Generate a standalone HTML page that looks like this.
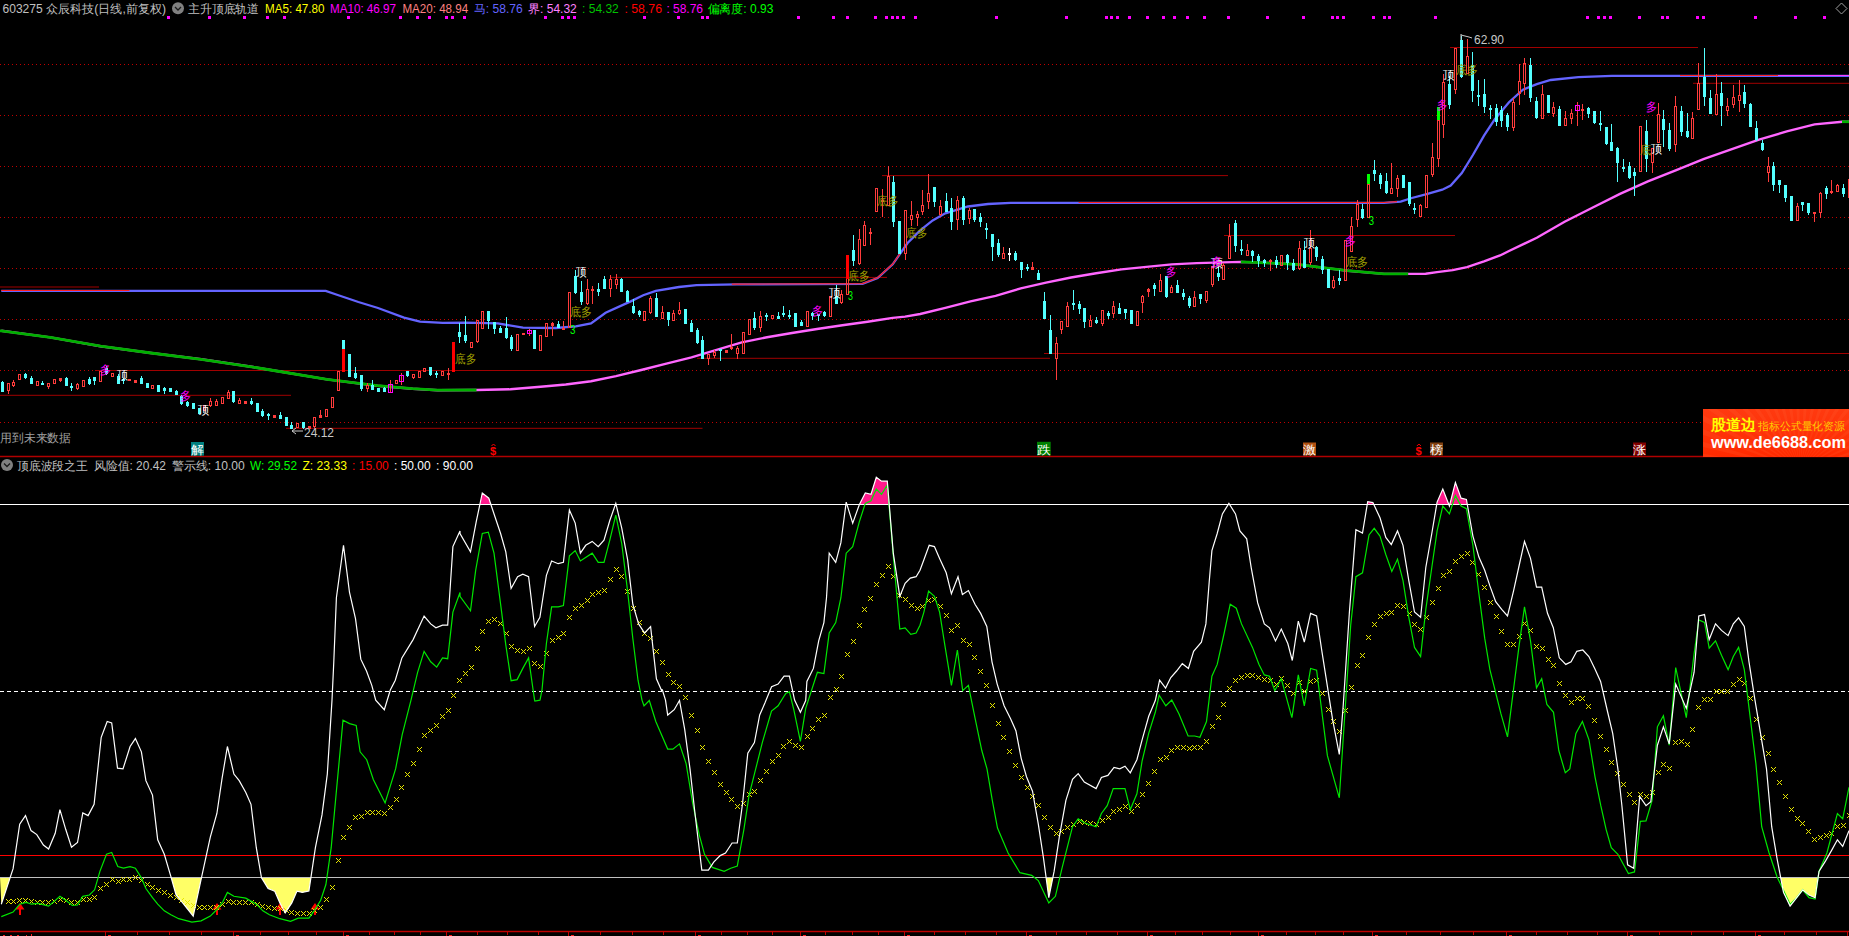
<!DOCTYPE html>
<html><head><meta charset="utf-8">
<style>
html,body{margin:0;padding:0;background:#000;}
body{width:1849px;height:936px;overflow:hidden;position:relative;font-family:"Liberation Sans",sans-serif;}
svg{position:absolute;left:0;top:0;font-family:"Liberation Sans",sans-serif;}
.t{position:absolute;font-size:12px;line-height:14px;white-space:nowrap;}
</style></head><body>
<svg width="1849" height="936" viewBox="0 0 1849 936">
<line x1="0" y1="456.5" x2="1849" y2="456.5" stroke="#b00000" stroke-width="1.5"/>
<line x1="0" y1="64.5" x2="1849" y2="64.5" stroke="#c00000" stroke-width="1" stroke-dasharray="1,3"/>
<line x1="0" y1="115.5" x2="1849" y2="115.5" stroke="#c00000" stroke-width="1" stroke-dasharray="1,3"/>
<line x1="0" y1="166.5" x2="1849" y2="166.5" stroke="#c00000" stroke-width="1" stroke-dasharray="1,3"/>
<line x1="0" y1="217.5" x2="1849" y2="217.5" stroke="#c00000" stroke-width="1" stroke-dasharray="1,3"/>
<line x1="0" y1="268.5" x2="1849" y2="268.5" stroke="#c00000" stroke-width="1" stroke-dasharray="1,3"/>
<line x1="0" y1="319.5" x2="1849" y2="319.5" stroke="#c00000" stroke-width="1" stroke-dasharray="1,3"/>
<line x1="0" y1="370.5" x2="1849" y2="370.5" stroke="#c00000" stroke-width="1" stroke-dasharray="1,3"/>
<line x1="0" y1="422.5" x2="1849" y2="422.5" stroke="#c00000" stroke-width="1" stroke-dasharray="1,3"/>
<line x1="0" y1="287" x2="99" y2="287" stroke="#a00000" stroke-width="1"/>
<line x1="95" y1="370.5" x2="615" y2="370.5" stroke="#a00000" stroke-width="1"/>
<line x1="0" y1="395.3" x2="291" y2="395.3" stroke="#a00000" stroke-width="1"/>
<line x1="286" y1="428.3" x2="702.5" y2="428.3" stroke="#a00000" stroke-width="1"/>
<line x1="610" y1="277.4" x2="887" y2="277.4" stroke="#a00000" stroke-width="1"/>
<line x1="697" y1="358.3" x2="1050" y2="358.3" stroke="#a00000" stroke-width="1"/>
<line x1="882" y1="175.6" x2="1228" y2="175.6" stroke="#a00000" stroke-width="1"/>
<line x1="1044" y1="353.5" x2="1849" y2="353.5" stroke="#a00000" stroke-width="1"/>
<line x1="1224" y1="235.5" x2="1455" y2="235.5" stroke="#a00000" stroke-width="1"/>
<line x1="1450" y1="47.5" x2="1698" y2="47.5" stroke="#a00000" stroke-width="1"/>
<line x1="1693" y1="83.3" x2="1849" y2="83.3" stroke="#a00000" stroke-width="1"/>
<polyline points="1.3,290.8 325.7,290.8 337.7,295.0 358.4,302.0 378.0,308.0 404.0,317.7 420.0,321.6 442.7,322.8 465.2,322.7 497.8,323.4 523.0,327.7 555.7,328.0 575.8,326.4 591.0,323.4 605.6,312.7 630.7,301.4 643.2,295.2 655.8,290.8 679.0,287.0 696.5,285.2 736.8,284.4 862.5,283.9 877.6,278.1 892.7,264.3 907.6,243.0 920.2,230.4 932.7,220.4 945.3,213.3 968.0,206.5 988.0,204.0 1010.7,202.8 1384.0,202.8 1400.7,201.7 1411.8,198.0 1425.7,194.4 1442.3,189.7 1450.7,185.6 1461.8,173.0 1472.9,155.0 1484.0,135.6 1495.0,118.9 1509.0,102.2 1522.9,89.7 1536.8,84.2 1550.7,80.0 1578.4,77.2 1611.8,75.8 1849.0,75.8" fill="none" stroke="#6464ff" stroke-width="2.3"/>
<polyline points="1.3,290.5 129.5,290.5" fill="none" stroke="#ff2020" stroke-width="1.2"/>
<polyline points="731.8,284.2 736.8,284.1 862.5,283.6 877.6,277.8 892.7,264.0 900.0,253.6" fill="none" stroke="#ff2020" stroke-width="1.2"/>
<polyline points="1078.6,202.5 1384.0,202.5 1397.0,201.6" fill="none" stroke="#ff2020" stroke-width="1.2"/>
<polyline points="1680.0,75.5 1778.0,75.5" fill="none" stroke="#ff2020" stroke-width="1.2"/>
<polyline points="1778.0,75.5 1849.0,75.5" fill="none" stroke="#ff40ff" stroke-width="1.2"/>
<polyline points="1.3,330.8 50.3,337.4 100.6,346.2 150.9,353.0 201.2,359.3 251.5,366.8 276.7,371.0 327.0,379.4 377.3,385.7 412.5,388.7 437.6,390.2 476.5,390.0 510.4,389.3 540.6,386.8 565.8,384.5 591.0,381.3 616.0,376.2 641.2,370.0 666.4,363.7 691.5,357.4 704.0,353.6 741.8,342.3 767.0,337.3 792.0,333.0 817.0,329.0 842.4,325.2 867.6,321.7 892.7,317.9 905.0,316.6 920.2,314.0 945.3,307.9 970.5,301.3 995.6,295.8 1020.8,288.3 1046.0,282.7 1071.0,277.5 1096.2,273.2 1121.4,269.4 1146.5,266.9 1171.7,264.4 1196.8,263.1 1240.8,261.9 1272.2,263.1 1297.4,264.4 1322.5,267.6 1347.7,270.7 1384.0,273.9 1409.0,273.9 1425.7,273.8 1437.0,272.1 1452.7,270.1 1467.0,267.2 1484.0,261.4 1500.0,255.5 1509.0,251.0 1536.8,237.8 1564.6,221.7 1592.3,207.8 1620.0,193.9 1647.9,181.4 1675.7,170.3 1703.4,159.2 1731.2,149.4 1759.0,139.7 1786.8,131.4 1814.6,124.4 1842.3,121.7 1849.0,121.7" fill="none" stroke="#ff66ff" stroke-width="2.4"/>
<polyline points="0.0,330.8 1.3,330.8 50.3,337.4 100.6,346.2 150.9,353.0 201.2,359.3 251.5,366.8 276.7,371.0 327.0,379.4 377.3,385.7 412.5,388.7 437.6,390.2 476.5,390.0" fill="none" stroke="#00b000" stroke-width="2.8"/>
<polyline points="1240.8,261.9 1272.2,263.1 1297.4,264.4 1322.5,267.6 1347.7,270.7 1384.0,273.9 1408.2,273.9" fill="none" stroke="#00b000" stroke-width="2.8"/>
<polyline points="1842.0,121.7 1842.3,121.7 1849.0,121.7" fill="none" stroke="#00b000" stroke-width="2.8"/>
<path d="M2,381h1v11h-1zM1,382h3v10h-3zM25,373h1v6h-1zM24,374h3v4h-3zM31,376h1v8h-1zM30,378h3v6h-3zM42,381h1v4h-1zM41,383h3v2h-3zM66,377h1v9h-1zM65,378h3v8h-3zM71,383h1v8h-1zM70,386h3v2h-3zM89,377h1v8h-1zM88,379h3v5h-3zM94,377h1v8h-1zM93,377h3v4h-3zM106,366h1v9h-1zM105,368h3v6h-3zM118,374h1v10h-1zM117,376h3v8h-3zM123,378h1v6h-1zM122,379h3v2h-3zM141,376h1v8h-1zM140,378h3v6h-3zM147,383h1v5h-1zM146,383h3v5h-3zM158,385h1v7h-1zM157,385h3v7h-3zM164,387h1v7h-1zM163,388h3v3h-3zM170,388h1v4h-1zM169,388h3v4h-3zM176,390h1v5h-1zM175,391h3v4h-3zM181,395h1v10h-1zM180,396h3v8h-3zM187,401h1v6h-1zM186,402h3v4h-3zM193,403h1v6h-1zM192,403h3v6h-3zM199,408h1v6h-1zM198,408h3v6h-3zM233,391h1v12h-1zM232,391h3v11h-3zM251,398h1v7h-1zM250,401h3v3h-3zM257,403h1v9h-1zM256,403h3v9h-3zM262,409h1v8h-1zM261,411h3v5h-3zM268,413h1v7h-1zM267,414h3v2h-3zM280,412h1v7h-1zM279,415h3v4h-3zM286,417h1v9h-1zM285,417h3v9h-3zM291,422h1v7h-1zM290,425h3v4h-3zM303,422h1v7h-1zM302,422h3v6h-3zM342,340h3v9h-3zM349,354h1v23h-1zM348,354h3v23h-3zM355,367h1v12h-1zM354,373h3v5h-3zM361,375h1v16h-1zM360,375h3v14h-3zM372,380h1v10h-1zM371,385h3v5h-3zM378,388h1v4h-1zM377,388h3v4h-3zM384,387h1v5h-1zM383,388h3v4h-3zM407,371h1v6h-1zM406,371h3v5h-3zM430,367h1v9h-1zM429,367h3v8h-3zM436,371h1v7h-1zM435,373h3v2h-3zM459,323h1v20h-1zM458,332h3v5h-3zM465,316h1v27h-1zM464,335h3v6h-3zM488,311h1v18h-1zM487,311h3v10h-3zM494,322h1v12h-1zM493,322h3v7h-3zM500,326h1v7h-1zM499,328h3v5h-3zM506,317h1v22h-1zM505,328h3v10h-3zM511,335h1v16h-1zM510,337h3v12h-3zM534,330h1v19h-1zM533,330h3v19h-3zM558,321h1v7h-1zM557,324h3v4h-3zM575,270h1v24h-1zM574,276h3v17h-3zM581,281h1v24h-1zM580,292h3v10h-3zM598,283h1v13h-1zM597,289h3v3h-3zM604,276h1v13h-1zM603,279h3v10h-3zM621,278h1v14h-1zM620,279h3v13h-3zM627,290h1v12h-1zM626,291h3v11h-3zM633,299h1v15h-1zM632,306h3v7h-3zM639,310h1v7h-1zM638,311h3v4h-3zM656,293h1v24h-1zM655,298h3v19h-3zM668,312h1v14h-1zM667,312h3v8h-3zM685,309h1v15h-1zM684,309h3v15h-3zM691,320h1v12h-1zM690,323h3v9h-3zM697,328h1v16h-1zM696,330h3v13h-3zM702,336h1v23h-1zM701,340h3v19h-3zM720,349h1v12h-1zM719,349h3v2h-3zM754,312h1v18h-1zM753,318h3v10h-3zM766,313h1v8h-1zM765,315h3v2h-3zM778,312h1v7h-1zM777,316h3v3h-3zM783,306h1v11h-1zM782,313h3v2h-3zM789,310h1v9h-1zM788,315h3v2h-3zM795,313h1v14h-1zM794,313h3v14h-3zM801,320h1v6h-1zM800,322h3v4h-3zM812,312h1v8h-1zM811,313h3v3h-3zM818,314h1v7h-1zM817,314h3v2h-3zM824,311h1v6h-1zM823,312h3v4h-3zM836,285h1v19h-1zM835,296h3v8h-3zM853,235h1v31h-1zM852,250h3v11h-3zM893,176h1v51h-1zM892,182h3v40h-3zM899,221h1v33h-1zM898,221h3v33h-3zM934,187h1v20h-1zM933,187h3v15h-3zM946,193h1v19h-1zM945,201h3v11h-3zM951,198h1v32h-1zM950,208h3v14h-3zM963,196h1v29h-1zM962,198h3v22h-3zM974,209h1v13h-1zM973,209h3v11h-3zM980,213h1v14h-1zM979,217h3v5h-3zM986,223h1v16h-1zM985,228h3v2h-3zM992,234h1v27h-1zM991,234h3v13h-3zM998,239h1v18h-1zM997,243h3v12h-3zM1015,251h1v10h-1zM1014,253h3v7h-3zM1021,262h1v16h-1zM1020,262h3v8h-3zM1027,264h1v7h-1zM1026,267h3v2h-3zM1038,270h1v10h-1zM1037,273h3v7h-3zM1044,292h1v27h-1zM1043,301h3v18h-3zM1050,315h1v39h-1zM1049,330h3v24h-3zM1073,290h1v20h-1zM1072,303h3v2h-3zM1079,301h1v13h-1zM1078,304h3v5h-3zM1084,308h1v20h-1zM1083,308h3v14h-3zM1096,317h1v7h-1zM1095,320h3v3h-3zM1108,311h1v8h-1zM1107,313h3v3h-3zM1119,303h1v11h-1zM1118,308h3v6h-3zM1125,309h1v10h-1zM1124,309h3v4h-3zM1131,310h1v14h-1zM1130,310h3v14h-3zM1154,283h1v13h-1zM1153,285h3v4h-3zM1166,276h1v22h-1zM1165,276h3v21h-3zM1177,280h1v13h-1zM1176,285h3v8h-3zM1183,289h1v11h-1zM1182,293h3v4h-3zM1189,296h1v12h-1zM1188,298h3v8h-3zM1200,294h1v10h-1zM1199,294h3v5h-3zM1218,267h1v14h-1zM1217,273h3v4h-3zM1235,220h1v32h-1zM1234,223h3v23h-3zM1241,240h1v15h-1zM1240,249h3v2h-3zM1252,250h1v12h-1zM1251,251h3v5h-3zM1258,254h1v13h-1zM1257,256h3v5h-3zM1264,259h1v8h-1zM1263,260h3v3h-3zM1276,256h1v12h-1zM1275,260h3v5h-3zM1287,254h1v16h-1zM1286,255h3v8h-3zM1293,259h1v12h-1zM1292,263h3v7h-3zM1304,241h1v27h-1zM1303,250h3v18h-3zM1316,246h1v15h-1zM1315,247h3v10h-3zM1322,256h1v18h-1zM1321,259h3v11h-3zM1328,269h1v19h-1zM1327,269h3v19h-3zM1339,270h1v15h-1zM1338,278h3v3h-3zM1362,204h1v15h-1zM1361,209h3v9h-3zM1374,160h1v21h-1zM1373,170h3v4h-3zM1380,173h1v16h-1zM1379,175h3v9h-3zM1386,173h1v21h-1zM1385,181h3v12h-3zM1403,175h1v13h-1zM1402,175h3v13h-3zM1409,182h1v24h-1zM1408,182h3v22h-3zM1414,203h1v11h-1zM1413,208h3v2h-3zM1449,76h1v33h-1zM1448,84h3v21h-3zM1461,36h1v42h-1zM1460,40h3v37h-3zM1472,52h1v50h-1zM1471,65h3v26h-3zM1478,80h1v26h-1zM1477,95h3v2h-3zM1484,79h1v34h-1zM1483,94h3v13h-3zM1490,105h1v14h-1zM1489,108h3v2h-3zM1496,104h1v22h-1zM1495,108h3v14h-3zM1501,106h1v21h-1zM1500,110h3v11h-3zM1507,113h1v18h-1zM1506,115h3v12h-3zM1530,58h1v44h-1zM1529,65h3v33h-3zM1536,97h1v22h-1zM1535,101h3v17h-3zM1548,95h1v18h-1zM1547,95h3v18h-3zM1559,106h1v20h-1zM1558,109h3v17h-3zM1588,107h1v11h-1zM1587,108h3v6h-3zM1594,111h1v13h-1zM1593,111h3v12h-3zM1600,111h1v20h-1zM1599,123h3v2h-3zM1606,127h1v18h-1zM1605,127h3v17h-3zM1611,124h1v27h-1zM1610,142h3v9h-3zM1617,147h1v35h-1zM1616,148h3v15h-3zM1623,159h1v13h-1zM1622,167h3v2h-3zM1629,162h1v17h-1zM1628,166h3v12h-3zM1634,168h1v28h-1zM1633,172h3v4h-3zM1646,120h1v52h-1zM1645,131h3v28h-3zM1663,110h1v37h-1zM1662,119h3v11h-3zM1669,123h1v28h-1zM1668,130h3v19h-3zM1681,106h1v30h-1zM1680,111h3v21h-3zM1687,113h1v25h-1zM1686,131h3v6h-3zM1704,48h1v58h-1zM1703,77h3v20h-3zM1710,90h1v24h-1zM1709,98h3v16h-3zM1721,82h1v44h-1zM1720,93h3v13h-3zM1744,85h1v23h-1zM1743,92h3v12h-3zM1750,103h1v24h-1zM1749,104h3v23h-3zM1756,121h1v20h-1zM1755,128h3v12h-3zM1762,140h1v11h-1zM1761,143h3v7h-3zM1773,162h1v29h-1zM1772,166h3v19h-3zM1779,180h1v13h-1zM1778,180h3v5h-3zM1785,185h1v17h-1zM1784,185h3v13h-3zM1791,196h1v25h-1zM1790,196h3v25h-3zM1802,202h1v9h-1zM1801,202h3v3h-3zM1808,203h1v12h-1zM1807,203h3v10h-3zM1826,186h1v13h-1zM1825,188h3v6h-3zM1843,184h1v13h-1zM1842,188h3v6h-3z" fill="#54ffff" shape-rendering="crispEdges"/>
<path d="M8,391h1v3h-1zM7,383h1v8h-1zM9,383h1v8h-1zM8,383h1v1h-1zM8,390h1v1h-1zM13,380h1v2h-1zM13,386h1v1h-1zM12,382h1v4h-1zM14,382h1v4h-1zM13,382h1v1h-1zM13,385h1v1h-1zM18,374h1v6h-1zM20,374h1v6h-1zM19,374h1v1h-1zM19,379h1v1h-1zM36,381h1v5h-1zM38,381h1v5h-1zM37,381h1v1h-1zM37,385h1v1h-1zM48,387h1v2h-1zM47,383h1v4h-1zM49,383h1v4h-1zM48,383h1v1h-1zM48,386h1v1h-1zM53,379h1v5h-1zM55,379h1v5h-1zM54,379h1v1h-1zM54,383h1v1h-1zM60,381h1v1h-1zM59,378h3v3h-3zM77,383h1v1h-1zM77,389h1v1h-1zM76,384h1v5h-1zM78,384h1v5h-1zM77,384h1v1h-1zM77,388h1v1h-1zM82,380h1v7h-1zM84,380h1v7h-1zM83,380h1v1h-1zM83,386h1v1h-1zM99,371h1v11h-1zM101,371h1v11h-1zM100,371h1v1h-1zM100,381h1v1h-1zM111,373h1v4h-1zM113,373h1v4h-1zM112,373h1v1h-1zM112,376h1v1h-1zM128,379h3v2h-3zM134,380h3v3h-3zM151,385h1v4h-1zM153,385h1v4h-1zM152,385h1v1h-1zM152,388h1v1h-1zM203,405h1v6h-1zM205,405h1v6h-1zM204,405h1v1h-1zM204,410h1v1h-1zM210,398h1v3h-1zM210,406h1v1h-1zM209,401h1v5h-1zM211,401h1v5h-1zM210,401h1v1h-1zM210,405h1v1h-1zM216,399h1v2h-1zM215,401h1v5h-1zM217,401h1v5h-1zM216,401h1v1h-1zM216,405h1v1h-1zM221,397h1v7h-1zM223,397h1v7h-1zM222,397h1v1h-1zM222,403h1v1h-1zM228,390h1v2h-1zM227,392h1v7h-1zM229,392h1v7h-1zM228,392h1v1h-1zM228,398h1v1h-1zM239,398h1v2h-1zM238,400h1v4h-1zM240,400h1v4h-1zM239,400h1v1h-1zM239,403h1v1h-1zM244,401h3v3h-3zM273,415h3v3h-3zM296,423h1v5h-1zM298,423h1v5h-1zM297,423h1v1h-1zM297,427h1v1h-1zM308,426h3v3h-3zM314,427h1v1h-1zM313,417h1v10h-1zM315,417h1v10h-1zM314,417h1v1h-1zM314,426h1v1h-1zM320,410h1v5h-1zM319,415h3v3h-3zM325,409h1v8h-1zM327,409h1v8h-1zM326,409h1v1h-1zM326,416h1v1h-1zM331,397h1v11h-1zM333,397h1v11h-1zM332,397h1v1h-1zM332,407h1v1h-1zM337,371h1v20h-1zM339,371h1v20h-1zM338,371h1v1h-1zM338,390h1v1h-1zM367,383h1v2h-1zM367,389h1v3h-1zM366,385h1v4h-1zM368,385h1v4h-1zM367,385h1v1h-1zM367,388h1v1h-1zM390,380h1v13h-1zM395,380h1v4h-1zM397,380h1v4h-1zM396,380h1v1h-1zM396,383h1v1h-1zM401,373h1v12h-1zM413,378h1v1h-1zM412,374h1v4h-1zM414,374h1v4h-1zM413,374h1v1h-1zM413,377h1v1h-1zM418,371h1v7h-1zM420,371h1v7h-1zM419,371h1v1h-1zM419,377h1v1h-1zM423,368h1v4h-1zM425,368h1v4h-1zM424,368h1v1h-1zM424,371h1v1h-1zM441,371h1v5h-1zM443,371h1v5h-1zM442,371h1v1h-1zM442,375h1v1h-1zM448,368h1v5h-1zM448,375h1v5h-1zM447,373h3v2h-3zM470,342h1v6h-1zM472,342h1v6h-1zM471,342h1v1h-1zM471,347h1v1h-1zM477,342h1v1h-1zM476,320h1v22h-1zM478,320h1v22h-1zM477,320h1v1h-1zM477,341h1v1h-1zM481,311h1v18h-1zM483,311h1v18h-1zM482,311h1v1h-1zM482,328h1v1h-1zM516,334h1v17h-1zM518,334h1v17h-1zM517,334h1v1h-1zM517,350h1v1h-1zM522,333h3v2h-3zM529,329h1v7h-1zM539,335h1v16h-1zM541,335h1v16h-1zM540,335h1v1h-1zM540,350h1v1h-1zM545,323h1v14h-1zM547,323h1v14h-1zM546,323h1v1h-1zM546,336h1v1h-1zM552,322h1v1h-1zM552,326h1v10h-1zM551,323h3v3h-3zM563,321h1v7h-1zM562,328h3v2h-3zM568,292h1v36h-1zM570,292h1v36h-1zM569,292h1v1h-1zM569,327h1v1h-1zM587,279h1v10h-1zM587,304h1v1h-1zM586,289h1v15h-1zM588,289h1v15h-1zM587,289h1v1h-1zM587,303h1v1h-1zM592,286h1v3h-1zM592,291h1v13h-1zM591,289h3v2h-3zM610,275h1v4h-1zM610,289h1v8h-1zM609,279h1v10h-1zM611,279h1v10h-1zM610,279h1v1h-1zM610,288h1v1h-1zM616,274h1v5h-1zM616,285h1v4h-1zM615,279h1v6h-1zM617,279h1v6h-1zM616,279h1v1h-1zM616,284h1v1h-1zM643,311h1v10h-1zM645,311h1v10h-1zM644,311h1v1h-1zM644,320h1v1h-1zM650,296h1v2h-1zM650,313h1v1h-1zM649,298h1v15h-1zM651,298h1v15h-1zM650,298h1v1h-1zM650,312h1v1h-1zM662,306h1v6h-1zM661,312h1v7h-1zM663,312h1v7h-1zM662,312h1v1h-1zM662,318h1v1h-1zM673,310h1v3h-1zM672,313h1v8h-1zM674,313h1v8h-1zM673,313h1v1h-1zM673,320h1v1h-1zM679,302h1v8h-1zM679,314h1v1h-1zM678,310h1v4h-1zM680,310h1v4h-1zM679,310h1v1h-1zM679,313h1v1h-1zM708,359h1v6h-1zM707,354h1v5h-1zM709,354h1v5h-1zM708,354h1v1h-1zM708,358h1v1h-1zM714,350h1v2h-1zM714,356h1v2h-1zM713,352h1v4h-1zM715,352h1v4h-1zM714,352h1v1h-1zM714,355h1v1h-1zM725,350h3v3h-3zM731,334h1v13h-1zM731,349h1v1h-1zM730,347h3v2h-3zM737,346h1v2h-1zM737,354h1v5h-1zM736,348h1v6h-1zM738,348h1v6h-1zM737,348h1v1h-1zM737,353h1v1h-1zM742,332h1v22h-1zM744,332h1v22h-1zM743,332h1v1h-1zM743,353h1v1h-1zM748,319h1v16h-1zM750,319h1v16h-1zM749,319h1v1h-1zM749,334h1v1h-1zM760,311h1v5h-1zM760,328h1v4h-1zM759,316h1v12h-1zM761,316h1v12h-1zM760,316h1v1h-1zM760,327h1v1h-1zM771,315h1v4h-1zM773,315h1v4h-1zM772,315h1v1h-1zM772,318h1v1h-1zM806,311h1v16h-1zM808,311h1v16h-1zM807,311h1v1h-1zM807,326h1v1h-1zM829,296h1v21h-1zM831,296h1v21h-1zM830,296h1v1h-1zM830,316h1v1h-1zM841,290h1v4h-1zM841,303h1v1h-1zM840,294h1v9h-1zM842,294h1v9h-1zM841,294h1v1h-1zM841,302h1v1h-1zM846,279h1v16h-1zM848,279h1v16h-1zM847,294h1v1h-1zM859,229h1v10h-1zM859,264h1v1h-1zM858,239h1v25h-1zM860,239h1v25h-1zM859,239h1v1h-1zM859,263h1v1h-1zM864,221h1v4h-1zM863,225h1v21h-1zM865,225h1v21h-1zM864,225h1v1h-1zM864,245h1v1h-1zM870,228h1v4h-1zM870,234h1v11h-1zM869,232h3v2h-3zM875,188h1v24h-1zM877,188h1v24h-1zM876,188h1v1h-1zM876,211h1v1h-1zM882,189h1v11h-1zM882,202h1v15h-1zM881,200h3v2h-3zM888,166h1v10h-1zM887,176h1v30h-1zM889,176h1v30h-1zM888,176h1v1h-1zM888,205h1v1h-1zM905,254h1v6h-1zM904,210h1v44h-1zM906,210h1v44h-1zM905,210h1v1h-1zM905,253h1v1h-1zM911,201h1v14h-1zM911,220h1v6h-1zM910,215h1v5h-1zM912,215h1v5h-1zM911,215h1v1h-1zM911,219h1v1h-1zM917,211h1v3h-1zM917,218h1v8h-1zM916,214h1v4h-1zM918,214h1v4h-1zM917,214h1v1h-1zM917,217h1v1h-1zM922,190h1v15h-1zM922,212h1v3h-1zM921,205h1v7h-1zM923,205h1v7h-1zM922,205h1v1h-1zM922,211h1v1h-1zM928,174h1v19h-1zM928,202h1v7h-1zM927,193h1v9h-1zM929,193h1v9h-1zM928,193h1v1h-1zM928,201h1v1h-1zM940,200h1v6h-1zM940,215h1v1h-1zM939,206h1v9h-1zM941,206h1v9h-1zM940,206h1v1h-1zM940,214h1v1h-1zM957,196h1v4h-1zM957,220h1v10h-1zM956,200h1v20h-1zM958,200h1v20h-1zM957,200h1v1h-1zM957,219h1v1h-1zM969,208h1v2h-1zM969,219h1v5h-1zM968,210h1v9h-1zM970,210h1v9h-1zM969,210h1v1h-1zM969,218h1v1h-1zM1003,247h1v6h-1zM1002,253h1v6h-1zM1004,253h1v6h-1zM1003,253h1v1h-1zM1003,258h1v1h-1zM1032,262h1v5h-1zM1031,267h3v3h-3zM1056,337h1v6h-1zM1056,359h1v21h-1zM1055,343h1v16h-1zM1057,343h1v16h-1zM1056,343h1v1h-1zM1056,358h1v1h-1zM1061,330h1v4h-1zM1060,321h1v9h-1zM1062,321h1v9h-1zM1061,321h1v1h-1zM1061,329h1v1h-1zM1067,302h1v4h-1zM1066,306h1v21h-1zM1068,306h1v21h-1zM1067,306h1v1h-1zM1067,326h1v1h-1zM1090,315h1v5h-1zM1089,320h1v7h-1zM1091,320h1v7h-1zM1090,320h1v1h-1zM1090,326h1v1h-1zM1102,324h1v2h-1zM1101,310h1v14h-1zM1103,310h1v14h-1zM1102,310h1v1h-1zM1102,323h1v1h-1zM1113,301h1v5h-1zM1113,314h1v4h-1zM1112,306h1v8h-1zM1114,306h1v8h-1zM1113,306h1v1h-1zM1113,313h1v1h-1zM1136,311h1v15h-1zM1138,311h1v15h-1zM1137,311h1v1h-1zM1137,325h1v1h-1zM1142,295h1v1h-1zM1142,303h1v10h-1zM1141,296h1v7h-1zM1143,296h1v7h-1zM1142,296h1v1h-1zM1142,302h1v1h-1zM1148,288h1v1h-1zM1148,292h1v5h-1zM1147,289h3v3h-3zM1160,274h1v6h-1zM1159,280h1v12h-1zM1161,280h1v12h-1zM1160,280h1v1h-1zM1160,291h1v1h-1zM1171,285h1v2h-1zM1170,287h1v6h-1zM1172,287h1v6h-1zM1171,287h1v1h-1zM1171,292h1v1h-1zM1194,291h1v6h-1zM1193,297h1v10h-1zM1195,297h1v10h-1zM1194,297h1v1h-1zM1194,306h1v1h-1zM1206,301h1v2h-1zM1205,291h1v10h-1zM1207,291h1v10h-1zM1206,291h1v1h-1zM1206,300h1v1h-1zM1212,285h1v2h-1zM1211,266h1v19h-1zM1213,266h1v19h-1zM1212,266h1v1h-1zM1212,284h1v1h-1zM1223,263h1v2h-1zM1222,265h1v15h-1zM1224,265h1v15h-1zM1223,265h1v1h-1zM1223,279h1v1h-1zM1229,224h1v12h-1zM1228,236h1v23h-1zM1230,236h1v23h-1zM1229,236h1v1h-1zM1229,258h1v1h-1zM1247,244h1v6h-1zM1246,250h1v6h-1zM1248,250h1v6h-1zM1247,250h1v1h-1zM1247,255h1v1h-1zM1270,259h1v1h-1zM1270,262h1v9h-1zM1269,260h3v2h-3zM1280,255h1v11h-1zM1282,255h1v11h-1zM1281,255h1v1h-1zM1281,265h1v1h-1zM1299,241h1v7h-1zM1299,269h1v1h-1zM1298,248h1v21h-1zM1300,248h1v21h-1zM1299,248h1v1h-1zM1299,268h1v1h-1zM1310,230h1v18h-1zM1310,263h1v2h-1zM1309,248h1v15h-1zM1311,248h1v15h-1zM1310,248h1v1h-1zM1310,262h1v1h-1zM1333,276h1v4h-1zM1333,288h1v1h-1zM1332,280h1v8h-1zM1334,280h1v8h-1zM1333,280h1v1h-1zM1333,287h1v1h-1zM1344,240h1v41h-1zM1346,240h1v41h-1zM1345,240h1v1h-1zM1345,280h1v1h-1zM1351,217h1v9h-1zM1350,226h1v26h-1zM1352,226h1v26h-1zM1351,226h1v1h-1zM1351,251h1v1h-1zM1357,200h1v4h-1zM1357,220h1v7h-1zM1356,204h1v16h-1zM1358,204h1v16h-1zM1357,204h1v1h-1zM1357,219h1v1h-1zM1368,174h1v10h-1zM1367,184h1v34h-1zM1369,184h1v34h-1zM1368,184h1v1h-1zM1368,217h1v1h-1zM1391,163h1v25h-1zM1390,188h1v6h-1zM1392,188h1v6h-1zM1391,188h1v1h-1zM1391,193h1v1h-1zM1397,175h1v3h-1zM1397,189h1v8h-1zM1396,178h1v11h-1zM1398,178h1v11h-1zM1397,178h1v1h-1zM1397,188h1v1h-1zM1420,204h1v1h-1zM1419,205h1v12h-1zM1421,205h1v12h-1zM1420,205h1v1h-1zM1420,216h1v1h-1zM1425,175h1v33h-1zM1427,175h1v33h-1zM1426,175h1v1h-1zM1426,207h1v1h-1zM1432,143h1v14h-1zM1432,175h1v2h-1zM1431,157h1v18h-1zM1433,157h1v18h-1zM1432,157h1v1h-1zM1432,174h1v1h-1zM1438,107h1v13h-1zM1438,159h1v8h-1zM1437,120h1v39h-1zM1439,120h1v39h-1zM1438,120h1v1h-1zM1438,158h1v1h-1zM1443,74h1v8h-1zM1443,125h1v13h-1zM1442,82h1v43h-1zM1444,82h1v43h-1zM1443,82h1v1h-1zM1443,124h1v1h-1zM1455,90h1v4h-1zM1454,48h1v42h-1zM1456,48h1v42h-1zM1455,48h1v1h-1zM1455,89h1v1h-1zM1467,39h1v17h-1zM1466,56h1v18h-1zM1468,56h1v18h-1zM1467,56h1v1h-1zM1467,73h1v1h-1zM1513,98h1v4h-1zM1513,128h1v3h-1zM1512,102h1v26h-1zM1514,102h1v26h-1zM1513,102h1v1h-1zM1513,127h1v1h-1zM1519,64h1v17h-1zM1519,94h1v11h-1zM1518,81h1v13h-1zM1520,81h1v13h-1zM1519,81h1v1h-1zM1519,93h1v1h-1zM1524,58h1v5h-1zM1524,84h1v11h-1zM1523,63h1v21h-1zM1525,63h1v21h-1zM1524,63h1v1h-1zM1524,83h1v1h-1zM1542,85h1v9h-1zM1541,94h1v25h-1zM1543,94h1v25h-1zM1542,94h1v1h-1zM1542,118h1v1h-1zM1553,102h1v5h-1zM1553,114h1v3h-1zM1552,107h1v7h-1zM1554,107h1v7h-1zM1553,107h1v1h-1zM1553,113h1v1h-1zM1565,111h1v7h-1zM1564,118h1v8h-1zM1566,118h1v8h-1zM1565,118h1v1h-1zM1565,125h1v1h-1zM1571,109h1v4h-1zM1571,119h1v5h-1zM1570,113h1v6h-1zM1572,113h1v6h-1zM1571,113h1v1h-1zM1571,118h1v1h-1zM1577,102h1v24h-1zM1582,104h1v5h-1zM1582,111h1v9h-1zM1581,109h3v2h-3zM1639,126h1v46h-1zM1641,126h1v46h-1zM1640,126h1v1h-1zM1640,171h1v1h-1zM1652,163h1v10h-1zM1651,148h1v15h-1zM1653,148h1v15h-1zM1652,148h1v1h-1zM1652,162h1v1h-1zM1658,103h1v11h-1zM1657,114h1v29h-1zM1659,114h1v29h-1zM1658,114h1v1h-1zM1658,142h1v1h-1zM1675,96h1v10h-1zM1675,145h1v7h-1zM1674,106h1v39h-1zM1676,106h1v39h-1zM1675,106h1v1h-1zM1675,144h1v1h-1zM1692,112h1v6h-1zM1691,118h1v21h-1zM1693,118h1v21h-1zM1692,118h1v1h-1zM1692,138h1v1h-1zM1698,63h1v20h-1zM1697,83h1v27h-1zM1699,83h1v27h-1zM1698,83h1v1h-1zM1698,109h1v1h-1zM1716,74h1v20h-1zM1715,94h1v21h-1zM1717,94h1v21h-1zM1716,94h1v1h-1zM1716,114h1v1h-1zM1727,98h1v8h-1zM1727,111h1v5h-1zM1726,106h1v5h-1zM1728,106h1v5h-1zM1727,106h1v1h-1zM1727,110h1v1h-1zM1733,85h1v12h-1zM1733,105h1v3h-1zM1732,97h1v8h-1zM1734,97h1v8h-1zM1733,97h1v1h-1zM1733,104h1v1h-1zM1739,80h1v15h-1zM1739,101h1v11h-1zM1738,95h1v6h-1zM1740,95h1v6h-1zM1739,95h1v1h-1zM1739,100h1v1h-1zM1768,157h1v9h-1zM1768,173h1v9h-1zM1767,166h1v7h-1zM1769,166h1v7h-1zM1768,166h1v1h-1zM1768,172h1v1h-1zM1797,203h1v3h-1zM1796,206h1v15h-1zM1798,206h1v15h-1zM1797,206h1v1h-1zM1797,220h1v1h-1zM1814,214h1v8h-1zM1813,212h3v2h-3zM1820,192h1v1h-1zM1820,213h1v5h-1zM1819,193h1v20h-1zM1821,193h1v20h-1zM1820,193h1v1h-1zM1820,212h1v1h-1zM1831,180h1v11h-1zM1831,193h1v1h-1zM1830,191h3v2h-3zM1837,184h1v1h-1zM1836,185h1v7h-1zM1838,185h1v7h-1zM1837,185h1v1h-1zM1837,191h1v1h-1zM1848,179h1v19h-1zM1850,179h1v19h-1zM1849,179h1v1h-1zM1849,197h1v1h-1z" fill="#ff3c3c" shape-rendering="crispEdges"/>
<path d="M342,349h3v23h-3zM452,342h3v30h-3zM846,255h3v24h-3z" fill="#ff0000" shape-rendering="crispEdges"/>
<path d="M388,384h1v9h-1zM392,384h1v9h-1zM388,384h5v1h-5zM388,392h5v1h-5zM399,375h1v7h-1zM403,375h1v7h-1zM399,375h5v1h-5zM399,381h5v1h-5zM527,330h1v4h-1zM531,330h1v4h-1zM527,330h5v1h-5zM527,333h5v1h-5zM1575,105h1v6h-1zM1579,105h1v6h-1zM1575,105h5v1h-5zM1575,110h5v1h-5z" fill="#ff00ff" shape-rendering="crispEdges"/>
<path d="M1367,174h3v10h-3zM1437,107h3v13h-3z" fill="#00ff00" shape-rendering="crispEdges"/>
<path d="M1009,248h1v13h-1zM1008,253h3v2h-3z" fill="#ffffff" shape-rendering="crispEdges"/>
<text x="117" y="378.9" font-size="12" fill="#fff" textLength="11" lengthAdjust="spacingAndGlyphs">顶</text>
<text x="197.8" y="413.7" font-size="12" fill="#fff" textLength="11.199999999999989" lengthAdjust="spacingAndGlyphs">顶</text>
<text x="99.5" y="373.9" font-size="12" fill="#ff00ff" textLength="11.200000000000003" lengthAdjust="spacingAndGlyphs">多</text>
<text x="180.3" y="400.0" font-size="12" fill="#ff00ff" textLength="11.199999999999989" lengthAdjust="spacingAndGlyphs">多</text>
<text x="455" y="362.5" font-size="12" fill="#a0a000" textLength="21" lengthAdjust="spacingAndGlyphs">底多</text>
<text x="575.5" y="275.5" font-size="12" fill="#fff" textLength="10.5" lengthAdjust="spacingAndGlyphs">顶</text>
<text x="570" y="316.0" font-size="12" fill="#a0a000" textLength="22" lengthAdjust="spacingAndGlyphs">底多</text>
<text x="570" y="334.2" font-size="12" fill="#00ff00" textLength="5.5" lengthAdjust="spacingAndGlyphs">3</text>
<text x="829" y="296.5" font-size="12" fill="#fff" textLength="11.600000000000023" lengthAdjust="spacingAndGlyphs">顶</text>
<text x="811.7" y="314.5" font-size="12" fill="#ff00ff" textLength="11.299999999999955" lengthAdjust="spacingAndGlyphs">多</text>
<text x="848" y="300.3" font-size="12" fill="#00ff00" textLength="5" lengthAdjust="spacingAndGlyphs">3</text>
<text x="848" y="279.5" font-size="12" fill="#a0a000" textLength="21.5" lengthAdjust="spacingAndGlyphs">底多</text>
<text x="877" y="204.5" font-size="12" fill="#a0a000" textLength="21" lengthAdjust="spacingAndGlyphs">底多</text>
<text x="906" y="236.5" font-size="12" fill="#a0a000" textLength="21" lengthAdjust="spacingAndGlyphs">底多</text>
<text x="1165.5" y="275.9" font-size="12" fill="#ff00ff" textLength="10.5" lengthAdjust="spacingAndGlyphs">多</text>
<text x="1211" y="266.5" font-size="12" fill="#fff" textLength="12" lengthAdjust="spacingAndGlyphs">顶</text>
<text x="1211" y="265.5" font-size="12" fill="#ff00ff" textLength="12" lengthAdjust="spacingAndGlyphs">多</text>
<text x="1304" y="246.5" font-size="12" fill="#fff" textLength="11" lengthAdjust="spacingAndGlyphs">顶</text>
<text x="1345" y="245.3" font-size="12" fill="#ff00ff" textLength="11" lengthAdjust="spacingAndGlyphs">多</text>
<text x="1345.5" y="265.5" font-size="12" fill="#a0a000" textLength="22.5" lengthAdjust="spacingAndGlyphs">底多</text>
<text x="1368.7" y="225.2" font-size="12" fill="#00ff00" textLength="5.2999999999999545" lengthAdjust="spacingAndGlyphs">3</text>
<text x="1443" y="78.5" font-size="12" fill="#fff" textLength="11.5" lengthAdjust="spacingAndGlyphs">顶</text>
<text x="1455.7" y="73.5" font-size="12" fill="#a0a000" textLength="22.0" lengthAdjust="spacingAndGlyphs">底多</text>
<text x="1437" y="109.2" font-size="12" fill="#ff00ff" textLength="10.599999999999909" lengthAdjust="spacingAndGlyphs">多</text>
<text x="1645.8" y="111.1" font-size="12" fill="#ff00ff" textLength="11.200000000000045" lengthAdjust="spacingAndGlyphs">多</text>
<text x="1640" y="153.5" font-size="12" fill="#a0a000" textLength="11" lengthAdjust="spacingAndGlyphs">底</text>
<text x="1651" y="152.5" font-size="12" fill="#fff" textLength="11" lengthAdjust="spacingAndGlyphs">顶</text>
<path d="M167,16h3v3h-3zM208,16h3v3h-3zM243,16h3v3h-3zM266,16h3v3h-3zM283,16h3v3h-3zM347,16h3v3h-3zM399,16h3v3h-3zM416,16h3v3h-3zM428,16h3v3h-3zM445,16h3v3h-3zM451,16h3v3h-3zM463,16h3v3h-3zM544,16h3v3h-3zM561,16h3v3h-3zM567,16h3v3h-3zM573,16h3v3h-3zM643,16h3v3h-3zM677,16h3v3h-3zM701,16h3v3h-3zM706,16h3v3h-3zM797,16h3v3h-3zM832,16h3v3h-3zM846,16h3v3h-3zM874,16h3v3h-3zM885,16h3v3h-3zM891,16h3v3h-3zM896,16h3v3h-3zM902,16h3v3h-3zM914,16h3v3h-3zM995,16h3v3h-3zM1065,16h3v3h-3zM1105,16h3v3h-3zM1110,16h3v3h-3zM1116,16h3v3h-3zM1128,16h3v3h-3zM1146,16h3v3h-3zM1162,16h3v3h-3zM1173,16h3v3h-3zM1186,16h3v3h-3zM1203,16h3v3h-3zM1227,16h3v3h-3zM1266,16h3v3h-3zM1302,16h3v3h-3zM1331,16h3v3h-3zM1336,16h3v3h-3zM1342,16h3v3h-3zM1372,16h3v3h-3zM1383,16h3v3h-3zM1388,16h3v3h-3zM1434,16h3v3h-3zM1586,16h3v3h-3zM1597,16h3v3h-3zM1603,16h3v3h-3zM1609,16h3v3h-3zM1638,16h3v3h-3zM1661,16h3v3h-3zM1666,16h3v3h-3zM1696,16h3v3h-3zM1702,16h3v3h-3zM1754,16h3v3h-3zM1794,16h3v3h-3zM1823,16h3v3h-3z" fill="#ff00ff" shape-rendering="crispEdges"/>
<text x="1474" y="44" font-size="12" fill="#c8c8c8" textLength="30" lengthAdjust="spacingAndGlyphs">62.90</text>
<path d="M1461,34v6M1461,35l8,2l3,1" stroke="#c8c8c8" stroke-width="1" fill="none"/>
<text x="304" y="437" font-size="12" fill="#c8c8c8" textLength="30" lengthAdjust="spacingAndGlyphs">24.12</text>
<path d="M292,431h11M292,431l4,-3M292,431l4,3" stroke="#c8c8c8" stroke-width="1" fill="none"/>
<text x="0" y="442" font-size="12" fill="#a0a0a0" textLength="71" lengthAdjust="spacingAndGlyphs">用到未来数据</text>
<rect x="191" y="442" width="13" height="13.600000000000023" fill="#008080"/>
<text x="191" y="454.1" font-size="12" fill="#fff" textLength="13" lengthAdjust="spacingAndGlyphs">解</text>
<rect x="1037" y="441.8" width="13.700000000000045" height="13.599999999999966" fill="#008000"/>
<text x="1037" y="453.9" font-size="12" fill="#fff" textLength="13.700000000000045" lengthAdjust="spacingAndGlyphs">跌</text>
<rect x="1303" y="442.5" width="13" height="12.899999999999977" fill="#b05010"/>
<text x="1303" y="453.9" font-size="12" fill="#fff" textLength="13" lengthAdjust="spacingAndGlyphs">激</text>
<rect x="1430" y="442.5" width="13" height="12.899999999999977" fill="#804010"/>
<text x="1430" y="453.9" font-size="12" fill="#fff" textLength="13" lengthAdjust="spacingAndGlyphs">榜</text>
<rect x="1633" y="442.5" width="13" height="12.899999999999977" fill="#800000"/>
<text x="1633" y="453.9" font-size="12" fill="#fff" textLength="13" lengthAdjust="spacingAndGlyphs">涨</text>
<text x="490" y="455" font-size="11" font-weight="bold" fill="#ff0000">$</text>
<path d="M491.5,446l2,-2l2,2" stroke="#ff0000" stroke-width="1" fill="none"/>
<text x="1415.4" y="455" font-size="11" font-weight="bold" fill="#ff0000">$</text>
<path d="M1416.9,446l2,-2l2,2" stroke="#ff0000" stroke-width="1" fill="none"/>
<defs><linearGradient id="lg" x1="0" y1="0" x2="0" y2="1"><stop offset="0" stop-color="#ff3a10"/><stop offset="1" stop-color="#ff2a00"/></linearGradient></defs>
<rect x="1703" y="409" width="146" height="48" fill="url(#lg)"/>
<defs><clipPath id="lgc"><rect x="1703" y="409" width="146" height="48"/></clipPath></defs>
<path d="M1800,470L1580.0,470.0L1580.3,459.0zM1800,470L1581.5,444.5L1583.0,433.6zM1800,470L1585.9,419.3L1588.7,408.6zM1800,470L1593.3,394.8L1597.3,384.5zM1800,470L1603.4,371.3L1608.6,361.6zM1800,470L1616.2,349.1L1622.5,340.1zM1800,470L1631.5,328.6L1638.7,320.3zM1800,470L1649.0,310.0L1657.2,302.6zM1800,470L1668.6,293.5L1677.6,287.2zM1800,470L1690.0,279.5L1699.7,274.2zM1800,470L1712.9,268.0L1723.1,263.9zM1800,470L1736.9,259.2L1747.5,256.4zM1800,470L1761.8,253.3L1772.7,251.7zM1800,470L1787.2,250.4L1798.2,250.0zM1800,470L1812.8,250.4L1823.8,251.3zM1800,470L1838.2,253.3L1849.0,255.5zM1800,470L1863.1,259.2L1873.6,262.7zM1800,470L1887.1,268.0L1897.1,272.6zM1800,470L1910.0,279.5L1919.4,285.2zM1800,470L1931.4,293.5L1940.0,300.3zM1800,470L1951.0,310.0L1958.8,317.7zM1800,470L1968.5,328.6L1975.4,337.2zM1800,470L1983.8,349.1L1989.6,358.4zM1800,470L1996.6,371.3L2001.3,381.2zM1800,470L2006.7,394.8L2010.2,405.2zM1800,470L2014.1,419.3L2016.3,430.0zM1800,470L2018.5,444.5L2019.5,455.4zM1800,470L2020.0,470.0L2019.7,481.0z" fill="#ff7040" opacity="0.15" clip-path="url(#lgc)"/>
<text x="1711" y="430" font-size="15" font-weight="bold" fill="#ffff00" textLength="45" lengthAdjust="spacingAndGlyphs">股道边</text>
<text x="1758" y="429.5" font-size="11" fill="#ffcc00" textLength="87" lengthAdjust="spacingAndGlyphs">指标公式量化资源</text>
<text x="1711" y="448" font-size="17" font-weight="bold" fill="#ffffff" textLength="135" lengthAdjust="spacingAndGlyphs">www.de6688.com</text>
<line x1="0" y1="504.5" x2="1849" y2="504.5" stroke="#fff" stroke-width="1"/>
<line x1="0" y1="691.5" x2="1849" y2="691.5" stroke="#fff" stroke-width="1" stroke-dasharray="4,3"/>
<line x1="0" y1="855.5" x2="1849" y2="855.5" stroke="#f00" stroke-width="1"/>
<line x1="0" y1="877.5" x2="1849" y2="877.5" stroke="#c0c0c0" stroke-width="1"/>
<defs><clipPath id="above"><rect x="0" y="0" width="1849" height="504"/></clipPath><clipPath id="below"><rect x="0" y="878" width="1849" height="60"/></clipPath></defs>
<polygon points="0,504.5 1.3,904.2 13.1,868.7 19.7,824.1 25.5,815.6 31.0,830.6 36.8,834.6 43.4,845.1 48.6,849.0 55.2,833.3 59.9,809.6 65.7,829.3 71.5,847.2 77.5,842.5 82.8,813.0 88.1,815.6 94.1,804.3 101.2,737.3 107.2,721.5 111.7,722.9 117.5,768.1 123.0,768.9 130.1,746.5 135.4,738.6 141.4,751.8 145.9,780.7 152.5,795.1 157.7,839.8 164.3,854.3 170.9,876.6 176.1,895.0 182.7,902.9 193.2,916.1 201.1,879.3 210.3,837.2 216.9,813.5 222.1,778.1 227.4,746.5 233.9,774.1 239.2,780.7 245.8,792.5 251.0,804.3 256.3,847.7 261.5,877.9 268.1,888.5 274.7,891.1 279.9,902.9 285.2,912.9 291.8,902.9 297.0,891.1 302.3,892.4 308.9,891.1 315.4,847.7 322.0,814.9 327.3,774.1 332.0,700.1 333.8,661.8 336.4,597.7 343.5,545.3 349.5,592.5 355.5,618.6 360.8,659.2 366.5,671.0 371.8,685.4 375.7,700.1 384.3,709.7 390.3,690.0 395.3,680.2 401.9,657.9 413.1,639.6 424.1,616.0 430.7,623.9 435.9,627.8 442.5,625.2 447.7,625.2 452.9,546.6 460.0,530.9 460.0,533.5 470.5,551.9 476.2,521.8 482.3,493.0 488.8,498.2 495.3,517.8 500.6,533.5 505.8,551.9 511.1,588.5 517.6,576.7 522.8,574.1 528.6,576.7 534.6,626.5 539.9,617.3 546.4,575.4 551.6,561.0 558.2,563.7 563.4,562.3 569.4,510.0 575.2,523.1 580.4,553.2 585.7,545.3 592.2,541.4 598.2,546.6 604.0,540.1 609.8,520.5 615.8,503.4 621.8,528.3 627.6,559.7 632.8,604.2 638.6,623.9 644.6,633.0 650.6,626.5 656.4,678.8 661.6,690.6 662.4,690.0 665.5,700.1 667.7,715.0 674.2,709.7 679.5,700.5 684.7,729.4 690.0,768.9 695.3,816.2 701.8,870.1 708.4,870.1 713.7,862.2 720.2,855.6 725.5,853.0 732.1,843.0 737.3,843.0 742.6,803.0 747.8,753.1 754.4,742.6 759.7,715.0 764.9,703.1 770.2,690.0 771.6,686.7 778.1,684.1 784.1,676.2 789.4,676.2 794.6,700.1 800.4,712.3 805.7,700.5 806.9,681.5 813.4,668.4 818.7,640.9 823.9,622.6 826.5,597.7 829.2,553.2 835.7,562.3 840.9,542.7 846.2,502.1 852.7,523.1 859.3,504.7 865.3,493.0 871.0,494.3 876.3,477.3 881.5,481.2 887.3,481.2 893.3,553.2 899.8,596.4 905.1,583.3 910.3,578.1 916.1,576.7 920.0,570.2 920.0,570.2 923.9,559.7 929.2,545.3 934.4,546.6 939.6,558.4 946.2,572.8 951.4,593.8 958.0,576.7 962.4,594.5 968.4,590.6 975.0,604.2 980.7,613.4 986.8,626.5 992.0,661.8 997.2,684.1 1004.1,705.8 1010.7,718.9 1015.9,730.7 1021.2,758.3 1026.5,776.7 1032.5,791.2 1038.3,824.1 1043.5,858.2 1048.8,897.7 1054.1,871.4 1059.3,837.2 1065.9,800.4 1072.5,779.4 1078.2,773.6 1084.3,782.0 1096.1,788.6 1101.4,777.5 1107.9,775.4 1114.0,767.5 1119.8,768.9 1125.0,766.2 1130.3,772.8 1136.9,759.7 1142.1,739.9 1148.7,716.3 1155.3,700.5 1159.6,680.2 1165.6,688.0 1170.8,677.5 1176.6,671.0 1182.3,663.7 1188.4,668.4 1193.6,651.4 1201.4,642.2 1205.9,623.9 1209.3,580.7 1211.9,550.6 1217.2,533.5 1222.4,513.9 1228.9,503.4 1235.5,513.9 1239.9,530.9 1246.7,538.8 1251.2,567.6 1257.7,602.9 1264.3,623.9 1269.5,627.8 1275.5,640.9 1281.3,629.1 1287.8,643.5 1292.3,660.5 1298.3,621.2 1304.3,642.2 1310.6,613.4 1316.6,616.0 1321.9,651.4 1332.7,720.2 1339.3,754.4 1343.2,705.8 1349.4,612.1 1355.9,529.6 1362.5,533.0 1367.7,501.6 1372.9,502.6 1380.0,517.8 1380.0,517.8 1385.8,537.4 1391.3,544.5 1397.5,530.9 1403.0,545.3 1408.8,580.6 1414.5,612.0 1420.6,617.3 1425.8,567.5 1431.8,533.5 1437.1,502.1 1442.8,489.0 1449.4,506.0 1455.4,482.5 1461.1,498.2 1466.4,499.5 1472.9,536.1 1478.9,557.1 1484.7,570.2 1489.9,585.9 1495.7,601.6 1501.7,609.4 1507.5,616.0 1513.5,591.1 1518.7,567.5 1524.5,541.4 1530.5,558.4 1536.5,587.2 1541.7,587.2 1547.5,613.3 1553.3,627.7 1559.3,657.8 1565.8,664.4 1571.1,661.8 1576.8,651.3 1582.8,650.0 1588.9,656.5 1594.6,668.3 1600.6,681.4 1607.4,711.0 1612.7,733.4 1617.9,768.9 1621.9,805.7 1627.6,864.8 1633.7,868.2 1639.7,796.5 1646.0,805.7 1650.8,801.7 1657.4,745.2 1663.4,726.8 1669.2,743.9 1675.7,684.0 1686.3,708.4 1694.1,672.2 1698.8,616.0 1704.5,614.6 1709.2,639.5 1715.5,623.8 1721.5,630.4 1728.1,635.6 1733.3,623.8 1738.6,617.8 1744.3,626.4 1749.0,661.8 1754.6,697.9 1761.2,737.3 1766.5,768.9 1771.7,826.7 1777.0,858.3 1783.5,892.4 1790.1,906.1 1796.7,897.7 1802.7,889.8 1809.0,895.1 1815.1,897.7 1819.0,871.4 1825.6,860.9 1831.6,850.4 1837.4,839.8 1842.7,846.4 1849.0,830.6 1849,504.5" fill="#ff1a8c" clip-path="url(#above)"/>
<polygon points="0,877.5 1.3,904.2 13.1,868.7 19.7,824.1 25.5,815.6 31.0,830.6 36.8,834.6 43.4,845.1 48.6,849.0 55.2,833.3 59.9,809.6 65.7,829.3 71.5,847.2 77.5,842.5 82.8,813.0 88.1,815.6 94.1,804.3 101.2,737.3 107.2,721.5 111.7,722.9 117.5,768.1 123.0,768.9 130.1,746.5 135.4,738.6 141.4,751.8 145.9,780.7 152.5,795.1 157.7,839.8 164.3,854.3 170.9,876.6 176.1,895.0 182.7,902.9 193.2,916.1 201.1,879.3 210.3,837.2 216.9,813.5 222.1,778.1 227.4,746.5 233.9,774.1 239.2,780.7 245.8,792.5 251.0,804.3 256.3,847.7 261.5,877.9 268.1,888.5 274.7,891.1 279.9,902.9 285.2,912.9 291.8,902.9 297.0,891.1 302.3,892.4 308.9,891.1 315.4,847.7 322.0,814.9 327.3,774.1 332.0,700.1 333.8,661.8 336.4,597.7 343.5,545.3 349.5,592.5 355.5,618.6 360.8,659.2 366.5,671.0 371.8,685.4 375.7,700.1 384.3,709.7 390.3,690.0 395.3,680.2 401.9,657.9 413.1,639.6 424.1,616.0 430.7,623.9 435.9,627.8 442.5,625.2 447.7,625.2 452.9,546.6 460.0,530.9 460.0,533.5 470.5,551.9 476.2,521.8 482.3,493.0 488.8,498.2 495.3,517.8 500.6,533.5 505.8,551.9 511.1,588.5 517.6,576.7 522.8,574.1 528.6,576.7 534.6,626.5 539.9,617.3 546.4,575.4 551.6,561.0 558.2,563.7 563.4,562.3 569.4,510.0 575.2,523.1 580.4,553.2 585.7,545.3 592.2,541.4 598.2,546.6 604.0,540.1 609.8,520.5 615.8,503.4 621.8,528.3 627.6,559.7 632.8,604.2 638.6,623.9 644.6,633.0 650.6,626.5 656.4,678.8 661.6,690.6 662.4,690.0 665.5,700.1 667.7,715.0 674.2,709.7 679.5,700.5 684.7,729.4 690.0,768.9 695.3,816.2 701.8,870.1 708.4,870.1 713.7,862.2 720.2,855.6 725.5,853.0 732.1,843.0 737.3,843.0 742.6,803.0 747.8,753.1 754.4,742.6 759.7,715.0 764.9,703.1 770.2,690.0 771.6,686.7 778.1,684.1 784.1,676.2 789.4,676.2 794.6,700.1 800.4,712.3 805.7,700.5 806.9,681.5 813.4,668.4 818.7,640.9 823.9,622.6 826.5,597.7 829.2,553.2 835.7,562.3 840.9,542.7 846.2,502.1 852.7,523.1 859.3,504.7 865.3,493.0 871.0,494.3 876.3,477.3 881.5,481.2 887.3,481.2 893.3,553.2 899.8,596.4 905.1,583.3 910.3,578.1 916.1,576.7 920.0,570.2 920.0,570.2 923.9,559.7 929.2,545.3 934.4,546.6 939.6,558.4 946.2,572.8 951.4,593.8 958.0,576.7 962.4,594.5 968.4,590.6 975.0,604.2 980.7,613.4 986.8,626.5 992.0,661.8 997.2,684.1 1004.1,705.8 1010.7,718.9 1015.9,730.7 1021.2,758.3 1026.5,776.7 1032.5,791.2 1038.3,824.1 1043.5,858.2 1048.8,897.7 1054.1,871.4 1059.3,837.2 1065.9,800.4 1072.5,779.4 1078.2,773.6 1084.3,782.0 1096.1,788.6 1101.4,777.5 1107.9,775.4 1114.0,767.5 1119.8,768.9 1125.0,766.2 1130.3,772.8 1136.9,759.7 1142.1,739.9 1148.7,716.3 1155.3,700.5 1159.6,680.2 1165.6,688.0 1170.8,677.5 1176.6,671.0 1182.3,663.7 1188.4,668.4 1193.6,651.4 1201.4,642.2 1205.9,623.9 1209.3,580.7 1211.9,550.6 1217.2,533.5 1222.4,513.9 1228.9,503.4 1235.5,513.9 1239.9,530.9 1246.7,538.8 1251.2,567.6 1257.7,602.9 1264.3,623.9 1269.5,627.8 1275.5,640.9 1281.3,629.1 1287.8,643.5 1292.3,660.5 1298.3,621.2 1304.3,642.2 1310.6,613.4 1316.6,616.0 1321.9,651.4 1332.7,720.2 1339.3,754.4 1343.2,705.8 1349.4,612.1 1355.9,529.6 1362.5,533.0 1367.7,501.6 1372.9,502.6 1380.0,517.8 1380.0,517.8 1385.8,537.4 1391.3,544.5 1397.5,530.9 1403.0,545.3 1408.8,580.6 1414.5,612.0 1420.6,617.3 1425.8,567.5 1431.8,533.5 1437.1,502.1 1442.8,489.0 1449.4,506.0 1455.4,482.5 1461.1,498.2 1466.4,499.5 1472.9,536.1 1478.9,557.1 1484.7,570.2 1489.9,585.9 1495.7,601.6 1501.7,609.4 1507.5,616.0 1513.5,591.1 1518.7,567.5 1524.5,541.4 1530.5,558.4 1536.5,587.2 1541.7,587.2 1547.5,613.3 1553.3,627.7 1559.3,657.8 1565.8,664.4 1571.1,661.8 1576.8,651.3 1582.8,650.0 1588.9,656.5 1594.6,668.3 1600.6,681.4 1607.4,711.0 1612.7,733.4 1617.9,768.9 1621.9,805.7 1627.6,864.8 1633.7,868.2 1639.7,796.5 1646.0,805.7 1650.8,801.7 1657.4,745.2 1663.4,726.8 1669.2,743.9 1675.7,684.0 1686.3,708.4 1694.1,672.2 1698.8,616.0 1704.5,614.6 1709.2,639.5 1715.5,623.8 1721.5,630.4 1728.1,635.6 1733.3,623.8 1738.6,617.8 1744.3,626.4 1749.0,661.8 1754.6,697.9 1761.2,737.3 1766.5,768.9 1771.7,826.7 1777.0,858.3 1783.5,892.4 1790.1,906.1 1796.7,897.7 1802.7,889.8 1809.0,895.1 1815.1,897.7 1819.0,871.4 1825.6,860.9 1831.6,850.4 1837.4,839.8 1842.7,846.4 1849.0,830.6 1849,877.5" fill="#ffff66" clip-path="url(#below)"/>
<path d="M15.5,909.5L20,903L24.5,909.5L21,909.5V915H19V909.5zM212.5,909.5L217,903L221.5,909.5L218,909.5V915H216V909.5zM275.5,909.5L280,903L284.5,909.5L281,909.5V915H279V909.5zM310.5,909.5L315,903L319.5,909.5L316,909.5V915H314V909.5z" fill="#ff0000"/>
<path d="M6,899h1v1h-1zM7,900h1v1h-1zM8,901h1v1h-1zM9,902h1v1h-1zM10,903h1v1h-1zM10,899h1v1h-1zM9,900h1v1h-1zM7,902h1v1h-1zM6,903h1v1h-1zM11,899h1v1h-1zM12,900h1v1h-1zM13,901h1v1h-1zM14,902h1v1h-1zM15,903h1v1h-1zM15,899h1v1h-1zM14,900h1v1h-1zM12,902h1v1h-1zM11,903h1v1h-1zM17,898h1v1h-1zM18,899h1v1h-1zM19,900h1v1h-1zM20,901h1v1h-1zM21,902h1v1h-1zM21,898h1v1h-1zM20,899h1v1h-1zM18,901h1v1h-1zM17,902h1v1h-1zM23,898h1v1h-1zM24,899h1v1h-1zM25,900h1v1h-1zM26,901h1v1h-1zM27,902h1v1h-1zM27,898h1v1h-1zM26,899h1v1h-1zM24,901h1v1h-1zM23,902h1v1h-1zM29,899h1v1h-1zM30,900h1v1h-1zM31,901h1v1h-1zM32,902h1v1h-1zM33,903h1v1h-1zM33,899h1v1h-1zM32,900h1v1h-1zM30,902h1v1h-1zM29,903h1v1h-1zM35,900h1v1h-1zM36,901h1v1h-1zM37,902h1v1h-1zM38,903h1v1h-1zM39,904h1v1h-1zM39,900h1v1h-1zM38,901h1v1h-1zM36,903h1v1h-1zM35,904h1v1h-1zM40,900h1v1h-1zM41,901h1v1h-1zM42,902h1v1h-1zM43,903h1v1h-1zM44,904h1v1h-1zM44,900h1v1h-1zM43,901h1v1h-1zM41,903h1v1h-1zM40,904h1v1h-1zM46,900h1v1h-1zM47,901h1v1h-1zM48,902h1v1h-1zM49,903h1v1h-1zM50,904h1v1h-1zM50,900h1v1h-1zM49,901h1v1h-1zM47,903h1v1h-1zM46,904h1v1h-1zM52,899h1v1h-1zM53,900h1v1h-1zM54,901h1v1h-1zM55,902h1v1h-1zM56,903h1v1h-1zM56,899h1v1h-1zM55,900h1v1h-1zM53,902h1v1h-1zM52,903h1v1h-1zM58,897h1v1h-1zM59,898h1v1h-1zM60,899h1v1h-1zM61,900h1v1h-1zM62,901h1v1h-1zM62,897h1v1h-1zM61,898h1v1h-1zM59,900h1v1h-1zM58,901h1v1h-1zM64,898h1v1h-1zM65,899h1v1h-1zM66,900h1v1h-1zM67,901h1v1h-1zM68,902h1v1h-1zM68,898h1v1h-1zM67,899h1v1h-1zM65,901h1v1h-1zM64,902h1v1h-1zM69,900h1v1h-1zM70,901h1v1h-1zM71,902h1v1h-1zM72,903h1v1h-1zM73,904h1v1h-1zM73,900h1v1h-1zM72,901h1v1h-1zM70,903h1v1h-1zM69,904h1v1h-1zM75,900h1v1h-1zM76,901h1v1h-1zM77,902h1v1h-1zM78,903h1v1h-1zM79,904h1v1h-1zM79,900h1v1h-1zM78,901h1v1h-1zM76,903h1v1h-1zM75,904h1v1h-1zM81,897h1v1h-1zM82,898h1v1h-1zM83,899h1v1h-1zM84,900h1v1h-1zM85,901h1v1h-1zM85,897h1v1h-1zM84,898h1v1h-1zM82,900h1v1h-1zM81,901h1v1h-1zM87,897h1v1h-1zM88,898h1v1h-1zM89,899h1v1h-1zM90,900h1v1h-1zM91,901h1v1h-1zM91,897h1v1h-1zM90,898h1v1h-1zM88,900h1v1h-1zM87,901h1v1h-1zM92,895h1v1h-1zM93,896h1v1h-1zM94,897h1v1h-1zM95,898h1v1h-1zM96,899h1v1h-1zM96,895h1v1h-1zM95,896h1v1h-1zM93,898h1v1h-1zM92,899h1v1h-1zM98,886h1v1h-1zM99,887h1v1h-1zM100,888h1v1h-1zM101,889h1v1h-1zM102,890h1v1h-1zM102,886h1v1h-1zM101,887h1v1h-1zM99,889h1v1h-1zM98,890h1v1h-1zM104,882h1v1h-1zM105,883h1v1h-1zM106,884h1v1h-1zM107,885h1v1h-1zM108,886h1v1h-1zM108,882h1v1h-1zM107,883h1v1h-1zM105,885h1v1h-1zM104,886h1v1h-1zM110,877h1v1h-1zM111,878h1v1h-1zM112,879h1v1h-1zM113,880h1v1h-1zM114,881h1v1h-1zM114,877h1v1h-1zM113,878h1v1h-1zM111,880h1v1h-1zM110,881h1v1h-1zM116,879h1v1h-1zM117,880h1v1h-1zM118,881h1v1h-1zM119,882h1v1h-1zM120,883h1v1h-1zM120,879h1v1h-1zM119,880h1v1h-1zM117,882h1v1h-1zM116,883h1v1h-1zM121,877h1v1h-1zM122,878h1v1h-1zM123,879h1v1h-1zM124,880h1v1h-1zM125,881h1v1h-1zM125,877h1v1h-1zM124,878h1v1h-1zM122,880h1v1h-1zM121,881h1v1h-1zM127,877h1v1h-1zM128,878h1v1h-1zM129,879h1v1h-1zM130,880h1v1h-1zM131,881h1v1h-1zM131,877h1v1h-1zM130,878h1v1h-1zM128,880h1v1h-1zM127,881h1v1h-1zM133,875h1v1h-1zM134,876h1v1h-1zM135,877h1v1h-1zM136,878h1v1h-1zM137,879h1v1h-1zM137,875h1v1h-1zM136,876h1v1h-1zM134,878h1v1h-1zM133,879h1v1h-1zM139,878h1v1h-1zM140,879h1v1h-1zM141,880h1v1h-1zM142,881h1v1h-1zM143,882h1v1h-1zM143,878h1v1h-1zM142,879h1v1h-1zM140,881h1v1h-1zM139,882h1v1h-1zM145,882h1v1h-1zM146,883h1v1h-1zM147,884h1v1h-1zM148,885h1v1h-1zM149,886h1v1h-1zM149,882h1v1h-1zM148,883h1v1h-1zM146,885h1v1h-1zM145,886h1v1h-1zM150,885h1v1h-1zM151,886h1v1h-1zM152,887h1v1h-1zM153,888h1v1h-1zM154,889h1v1h-1zM154,885h1v1h-1zM153,886h1v1h-1zM151,888h1v1h-1zM150,889h1v1h-1zM156,888h1v1h-1zM157,889h1v1h-1zM158,890h1v1h-1zM159,891h1v1h-1zM160,892h1v1h-1zM160,888h1v1h-1zM159,889h1v1h-1zM157,891h1v1h-1zM156,892h1v1h-1zM162,890h1v1h-1zM163,891h1v1h-1zM164,892h1v1h-1zM165,893h1v1h-1zM166,894h1v1h-1zM166,890h1v1h-1zM165,891h1v1h-1zM163,893h1v1h-1zM162,894h1v1h-1zM168,893h1v1h-1zM169,894h1v1h-1zM170,895h1v1h-1zM171,896h1v1h-1zM172,897h1v1h-1zM172,893h1v1h-1zM171,894h1v1h-1zM169,896h1v1h-1zM168,897h1v1h-1zM174,895h1v1h-1zM175,896h1v1h-1zM176,897h1v1h-1zM177,898h1v1h-1zM178,899h1v1h-1zM178,895h1v1h-1zM177,896h1v1h-1zM175,898h1v1h-1zM174,899h1v1h-1zM179,898h1v1h-1zM180,899h1v1h-1zM181,900h1v1h-1zM182,901h1v1h-1zM183,902h1v1h-1zM183,898h1v1h-1zM182,899h1v1h-1zM180,901h1v1h-1zM179,902h1v1h-1zM185,900h1v1h-1zM186,901h1v1h-1zM187,902h1v1h-1zM188,903h1v1h-1zM189,904h1v1h-1zM189,900h1v1h-1zM188,901h1v1h-1zM186,903h1v1h-1zM185,904h1v1h-1zM191,903h1v1h-1zM192,904h1v1h-1zM193,905h1v1h-1zM194,906h1v1h-1zM195,907h1v1h-1zM195,903h1v1h-1zM194,904h1v1h-1zM192,906h1v1h-1zM191,907h1v1h-1zM197,905h1v1h-1zM198,906h1v1h-1zM199,907h1v1h-1zM200,908h1v1h-1zM201,909h1v1h-1zM201,905h1v1h-1zM200,906h1v1h-1zM198,908h1v1h-1zM197,909h1v1h-1zM202,905h1v1h-1zM203,906h1v1h-1zM204,907h1v1h-1zM205,908h1v1h-1zM206,909h1v1h-1zM206,905h1v1h-1zM205,906h1v1h-1zM203,908h1v1h-1zM202,909h1v1h-1zM208,905h1v1h-1zM209,906h1v1h-1zM210,907h1v1h-1zM211,908h1v1h-1zM212,909h1v1h-1zM212,905h1v1h-1zM211,906h1v1h-1zM209,908h1v1h-1zM208,909h1v1h-1zM214,905h1v1h-1zM215,906h1v1h-1zM216,907h1v1h-1zM217,908h1v1h-1zM218,909h1v1h-1zM218,905h1v1h-1zM217,906h1v1h-1zM215,908h1v1h-1zM214,909h1v1h-1zM220,902h1v1h-1zM221,903h1v1h-1zM222,904h1v1h-1zM223,905h1v1h-1zM224,906h1v1h-1zM224,902h1v1h-1zM223,903h1v1h-1zM221,905h1v1h-1zM220,906h1v1h-1zM226,899h1v1h-1zM227,900h1v1h-1zM228,901h1v1h-1zM229,902h1v1h-1zM230,903h1v1h-1zM230,899h1v1h-1zM229,900h1v1h-1zM227,902h1v1h-1zM226,903h1v1h-1zM231,900h1v1h-1zM232,901h1v1h-1zM233,902h1v1h-1zM234,903h1v1h-1zM235,904h1v1h-1zM235,900h1v1h-1zM234,901h1v1h-1zM232,903h1v1h-1zM231,904h1v1h-1zM237,900h1v1h-1zM238,901h1v1h-1zM239,902h1v1h-1zM240,903h1v1h-1zM241,904h1v1h-1zM241,900h1v1h-1zM240,901h1v1h-1zM238,903h1v1h-1zM237,904h1v1h-1zM243,900h1v1h-1zM244,901h1v1h-1zM245,902h1v1h-1zM246,903h1v1h-1zM247,904h1v1h-1zM247,900h1v1h-1zM246,901h1v1h-1zM244,903h1v1h-1zM243,904h1v1h-1zM249,900h1v1h-1zM250,901h1v1h-1zM251,902h1v1h-1zM252,903h1v1h-1zM253,904h1v1h-1zM253,900h1v1h-1zM252,901h1v1h-1zM250,903h1v1h-1zM249,904h1v1h-1zM255,902h1v1h-1zM256,903h1v1h-1zM257,904h1v1h-1zM258,905h1v1h-1zM259,906h1v1h-1zM259,902h1v1h-1zM258,903h1v1h-1zM256,905h1v1h-1zM255,906h1v1h-1zM260,904h1v1h-1zM261,905h1v1h-1zM262,906h1v1h-1zM263,907h1v1h-1zM264,908h1v1h-1zM264,904h1v1h-1zM263,905h1v1h-1zM261,907h1v1h-1zM260,908h1v1h-1zM266,905h1v1h-1zM267,906h1v1h-1zM268,907h1v1h-1zM269,908h1v1h-1zM270,909h1v1h-1zM270,905h1v1h-1zM269,906h1v1h-1zM267,908h1v1h-1zM266,909h1v1h-1zM272,906h1v1h-1zM273,907h1v1h-1zM274,908h1v1h-1zM275,909h1v1h-1zM276,910h1v1h-1zM276,906h1v1h-1zM275,907h1v1h-1zM273,909h1v1h-1zM272,910h1v1h-1zM278,906h1v1h-1zM279,907h1v1h-1zM280,908h1v1h-1zM281,909h1v1h-1zM282,910h1v1h-1zM282,906h1v1h-1zM281,907h1v1h-1zM279,909h1v1h-1zM278,910h1v1h-1zM284,908h1v1h-1zM285,909h1v1h-1zM286,910h1v1h-1zM287,911h1v1h-1zM288,912h1v1h-1zM288,908h1v1h-1zM287,909h1v1h-1zM285,911h1v1h-1zM284,912h1v1h-1zM289,910h1v1h-1zM290,911h1v1h-1zM291,912h1v1h-1zM292,913h1v1h-1zM293,914h1v1h-1zM293,910h1v1h-1zM292,911h1v1h-1zM290,913h1v1h-1zM289,914h1v1h-1zM295,911h1v1h-1zM296,912h1v1h-1zM297,913h1v1h-1zM298,914h1v1h-1zM299,915h1v1h-1zM299,911h1v1h-1zM298,912h1v1h-1zM296,914h1v1h-1zM295,915h1v1h-1zM301,911h1v1h-1zM302,912h1v1h-1zM303,913h1v1h-1zM304,914h1v1h-1zM305,915h1v1h-1zM305,911h1v1h-1zM304,912h1v1h-1zM302,914h1v1h-1zM301,915h1v1h-1zM307,911h1v1h-1zM308,912h1v1h-1zM309,913h1v1h-1zM310,914h1v1h-1zM311,915h1v1h-1zM311,911h1v1h-1zM310,912h1v1h-1zM308,914h1v1h-1zM307,915h1v1h-1zM312,908h1v1h-1zM313,909h1v1h-1zM314,910h1v1h-1zM315,911h1v1h-1zM316,912h1v1h-1zM316,908h1v1h-1zM315,909h1v1h-1zM313,911h1v1h-1zM312,912h1v1h-1zM318,905h1v1h-1zM319,906h1v1h-1zM320,907h1v1h-1zM321,908h1v1h-1zM322,909h1v1h-1zM322,905h1v1h-1zM321,906h1v1h-1zM319,908h1v1h-1zM318,909h1v1h-1zM324,897h1v1h-1zM325,898h1v1h-1zM326,899h1v1h-1zM327,900h1v1h-1zM328,901h1v1h-1zM328,897h1v1h-1zM327,898h1v1h-1zM325,900h1v1h-1zM324,901h1v1h-1zM330,885h1v1h-1zM331,886h1v1h-1zM332,887h1v1h-1zM333,888h1v1h-1zM334,889h1v1h-1zM334,885h1v1h-1zM333,886h1v1h-1zM331,888h1v1h-1zM330,889h1v1h-1zM336,858h1v1h-1zM337,859h1v1h-1zM338,860h1v1h-1zM339,861h1v1h-1zM340,862h1v1h-1zM340,858h1v1h-1zM339,859h1v1h-1zM337,861h1v1h-1zM336,862h1v1h-1zM341,835h1v1h-1zM342,836h1v1h-1zM343,837h1v1h-1zM344,838h1v1h-1zM345,839h1v1h-1zM345,835h1v1h-1zM344,836h1v1h-1zM342,838h1v1h-1zM341,839h1v1h-1zM347,825h1v1h-1zM348,826h1v1h-1zM349,827h1v1h-1zM350,828h1v1h-1zM351,829h1v1h-1zM351,825h1v1h-1zM350,826h1v1h-1zM348,828h1v1h-1zM347,829h1v1h-1zM353,815h1v1h-1zM354,816h1v1h-1zM355,817h1v1h-1zM356,818h1v1h-1zM357,819h1v1h-1zM357,815h1v1h-1zM356,816h1v1h-1zM354,818h1v1h-1zM353,819h1v1h-1zM359,814h1v1h-1zM360,815h1v1h-1zM361,816h1v1h-1zM362,817h1v1h-1zM363,818h1v1h-1zM363,814h1v1h-1zM362,815h1v1h-1zM360,817h1v1h-1zM359,818h1v1h-1zM365,810h1v1h-1zM366,811h1v1h-1zM367,812h1v1h-1zM368,813h1v1h-1zM369,814h1v1h-1zM369,810h1v1h-1zM368,811h1v1h-1zM366,813h1v1h-1zM365,814h1v1h-1zM370,810h1v1h-1zM371,811h1v1h-1zM372,812h1v1h-1zM373,813h1v1h-1zM374,814h1v1h-1zM374,810h1v1h-1zM373,811h1v1h-1zM371,813h1v1h-1zM370,814h1v1h-1zM376,810h1v1h-1zM377,811h1v1h-1zM378,812h1v1h-1zM379,813h1v1h-1zM380,814h1v1h-1zM380,810h1v1h-1zM379,811h1v1h-1zM377,813h1v1h-1zM376,814h1v1h-1zM382,811h1v1h-1zM383,812h1v1h-1zM384,813h1v1h-1zM385,814h1v1h-1zM386,815h1v1h-1zM386,811h1v1h-1zM385,812h1v1h-1zM383,814h1v1h-1zM382,815h1v1h-1zM388,805h1v1h-1zM389,806h1v1h-1zM390,807h1v1h-1zM391,808h1v1h-1zM392,809h1v1h-1zM392,805h1v1h-1zM391,806h1v1h-1zM389,808h1v1h-1zM388,809h1v1h-1zM394,797h1v1h-1zM395,798h1v1h-1zM396,799h1v1h-1zM397,800h1v1h-1zM398,801h1v1h-1zM398,797h1v1h-1zM397,798h1v1h-1zM395,800h1v1h-1zM394,801h1v1h-1zM399,785h1v1h-1zM400,786h1v1h-1zM401,787h1v1h-1zM402,788h1v1h-1zM403,789h1v1h-1zM403,785h1v1h-1zM402,786h1v1h-1zM400,788h1v1h-1zM399,789h1v1h-1zM405,772h1v1h-1zM406,773h1v1h-1zM407,774h1v1h-1zM408,775h1v1h-1zM409,776h1v1h-1zM409,772h1v1h-1zM408,773h1v1h-1zM406,775h1v1h-1zM405,776h1v1h-1zM411,761h1v1h-1zM412,762h1v1h-1zM413,763h1v1h-1zM414,764h1v1h-1zM415,765h1v1h-1zM415,761h1v1h-1zM414,762h1v1h-1zM412,764h1v1h-1zM411,765h1v1h-1zM417,747h1v1h-1zM418,748h1v1h-1zM419,749h1v1h-1zM420,750h1v1h-1zM421,751h1v1h-1zM421,747h1v1h-1zM420,748h1v1h-1zM418,750h1v1h-1zM417,751h1v1h-1zM422,733h1v1h-1zM423,734h1v1h-1zM424,735h1v1h-1zM425,736h1v1h-1zM426,737h1v1h-1zM426,733h1v1h-1zM425,734h1v1h-1zM423,736h1v1h-1zM422,737h1v1h-1zM428,728h1v1h-1zM429,729h1v1h-1zM430,730h1v1h-1zM431,731h1v1h-1zM432,732h1v1h-1zM432,728h1v1h-1zM431,729h1v1h-1zM429,731h1v1h-1zM428,732h1v1h-1zM434,723h1v1h-1zM435,724h1v1h-1zM436,725h1v1h-1zM437,726h1v1h-1zM438,727h1v1h-1zM438,723h1v1h-1zM437,724h1v1h-1zM435,726h1v1h-1zM434,727h1v1h-1zM440,714h1v1h-1zM441,715h1v1h-1zM442,716h1v1h-1zM443,717h1v1h-1zM444,718h1v1h-1zM444,714h1v1h-1zM443,715h1v1h-1zM441,717h1v1h-1zM440,718h1v1h-1zM446,708h1v1h-1zM447,709h1v1h-1zM448,710h1v1h-1zM449,711h1v1h-1zM450,712h1v1h-1zM450,708h1v1h-1zM449,709h1v1h-1zM447,711h1v1h-1zM446,712h1v1h-1zM451,693h1v1h-1zM452,694h1v1h-1zM453,695h1v1h-1zM454,696h1v1h-1zM455,697h1v1h-1zM455,693h1v1h-1zM454,694h1v1h-1zM452,696h1v1h-1zM451,697h1v1h-1zM457,678h1v1h-1zM458,679h1v1h-1zM459,680h1v1h-1zM460,681h1v1h-1zM461,682h1v1h-1zM461,678h1v1h-1zM460,679h1v1h-1zM458,681h1v1h-1zM457,682h1v1h-1zM463,671h1v1h-1zM464,672h1v1h-1zM465,673h1v1h-1zM466,674h1v1h-1zM467,675h1v1h-1zM467,671h1v1h-1zM466,672h1v1h-1zM464,674h1v1h-1zM463,675h1v1h-1zM469,665h1v1h-1zM470,666h1v1h-1zM471,667h1v1h-1zM472,668h1v1h-1zM473,669h1v1h-1zM473,665h1v1h-1zM472,666h1v1h-1zM470,668h1v1h-1zM469,669h1v1h-1zM475,646h1v1h-1zM476,647h1v1h-1zM477,648h1v1h-1zM478,649h1v1h-1zM479,650h1v1h-1zM479,646h1v1h-1zM478,647h1v1h-1zM476,649h1v1h-1zM475,650h1v1h-1zM480,629h1v1h-1zM481,630h1v1h-1zM482,631h1v1h-1zM483,632h1v1h-1zM484,633h1v1h-1zM484,629h1v1h-1zM483,630h1v1h-1zM481,632h1v1h-1zM480,633h1v1h-1zM486,619h1v1h-1zM487,620h1v1h-1zM488,621h1v1h-1zM489,622h1v1h-1zM490,623h1v1h-1zM490,619h1v1h-1zM489,620h1v1h-1zM487,622h1v1h-1zM486,623h1v1h-1zM492,617h1v1h-1zM493,618h1v1h-1zM494,619h1v1h-1zM495,620h1v1h-1zM496,621h1v1h-1zM496,617h1v1h-1zM495,618h1v1h-1zM493,620h1v1h-1zM492,621h1v1h-1zM498,621h1v1h-1zM499,622h1v1h-1zM500,623h1v1h-1zM501,624h1v1h-1zM502,625h1v1h-1zM502,621h1v1h-1zM501,622h1v1h-1zM499,624h1v1h-1zM498,625h1v1h-1zM504,631h1v1h-1zM505,632h1v1h-1zM506,633h1v1h-1zM507,634h1v1h-1zM508,635h1v1h-1zM508,631h1v1h-1zM507,632h1v1h-1zM505,634h1v1h-1zM504,635h1v1h-1zM509,644h1v1h-1zM510,645h1v1h-1zM511,646h1v1h-1zM512,647h1v1h-1zM513,648h1v1h-1zM513,644h1v1h-1zM512,645h1v1h-1zM510,647h1v1h-1zM509,648h1v1h-1zM515,648h1v1h-1zM516,649h1v1h-1zM517,650h1v1h-1zM518,651h1v1h-1zM519,652h1v1h-1zM519,648h1v1h-1zM518,649h1v1h-1zM516,651h1v1h-1zM515,652h1v1h-1zM521,649h1v1h-1zM522,650h1v1h-1zM523,651h1v1h-1zM524,652h1v1h-1zM525,653h1v1h-1zM525,649h1v1h-1zM524,650h1v1h-1zM522,652h1v1h-1zM521,653h1v1h-1zM527,646h1v1h-1zM528,647h1v1h-1zM529,648h1v1h-1zM530,649h1v1h-1zM531,650h1v1h-1zM531,646h1v1h-1zM530,647h1v1h-1zM528,649h1v1h-1zM527,650h1v1h-1zM532,661h1v1h-1zM533,662h1v1h-1zM534,663h1v1h-1zM535,664h1v1h-1zM536,665h1v1h-1zM536,661h1v1h-1zM535,662h1v1h-1zM533,664h1v1h-1zM532,665h1v1h-1zM538,664h1v1h-1zM539,665h1v1h-1zM540,666h1v1h-1zM541,667h1v1h-1zM542,668h1v1h-1zM542,664h1v1h-1zM541,665h1v1h-1zM539,667h1v1h-1zM538,668h1v1h-1zM544,651h1v1h-1zM545,652h1v1h-1zM546,653h1v1h-1zM547,654h1v1h-1zM548,655h1v1h-1zM548,651h1v1h-1zM547,652h1v1h-1zM545,654h1v1h-1zM544,655h1v1h-1zM550,638h1v1h-1zM551,639h1v1h-1zM552,640h1v1h-1zM553,641h1v1h-1zM554,642h1v1h-1zM554,638h1v1h-1zM553,639h1v1h-1zM551,641h1v1h-1zM550,642h1v1h-1zM556,635h1v1h-1zM557,636h1v1h-1zM558,637h1v1h-1zM559,638h1v1h-1zM560,639h1v1h-1zM560,635h1v1h-1zM559,636h1v1h-1zM557,638h1v1h-1zM556,639h1v1h-1zM561,631h1v1h-1zM562,632h1v1h-1zM563,633h1v1h-1zM564,634h1v1h-1zM565,635h1v1h-1zM565,631h1v1h-1zM564,632h1v1h-1zM562,634h1v1h-1zM561,635h1v1h-1zM567,615h1v1h-1zM568,616h1v1h-1zM569,617h1v1h-1zM570,618h1v1h-1zM571,619h1v1h-1zM571,615h1v1h-1zM570,616h1v1h-1zM568,618h1v1h-1zM567,619h1v1h-1zM573,606h1v1h-1zM574,607h1v1h-1zM575,608h1v1h-1zM576,609h1v1h-1zM577,610h1v1h-1zM577,606h1v1h-1zM576,607h1v1h-1zM574,609h1v1h-1zM573,610h1v1h-1zM579,603h1v1h-1zM580,604h1v1h-1zM581,605h1v1h-1zM582,606h1v1h-1zM583,607h1v1h-1zM583,603h1v1h-1zM582,604h1v1h-1zM580,606h1v1h-1zM579,607h1v1h-1zM585,598h1v1h-1zM586,599h1v1h-1zM587,600h1v1h-1zM588,601h1v1h-1zM589,602h1v1h-1zM589,598h1v1h-1zM588,599h1v1h-1zM586,601h1v1h-1zM585,602h1v1h-1zM590,592h1v1h-1zM591,593h1v1h-1zM592,594h1v1h-1zM593,595h1v1h-1zM594,596h1v1h-1zM594,592h1v1h-1zM593,593h1v1h-1zM591,595h1v1h-1zM590,596h1v1h-1zM596,590h1v1h-1zM597,591h1v1h-1zM598,592h1v1h-1zM599,593h1v1h-1zM600,594h1v1h-1zM600,590h1v1h-1zM599,591h1v1h-1zM597,593h1v1h-1zM596,594h1v1h-1zM602,588h1v1h-1zM603,589h1v1h-1zM604,590h1v1h-1zM605,591h1v1h-1zM606,592h1v1h-1zM606,588h1v1h-1zM605,589h1v1h-1zM603,591h1v1h-1zM602,592h1v1h-1zM608,577h1v1h-1zM609,578h1v1h-1zM610,579h1v1h-1zM611,580h1v1h-1zM612,581h1v1h-1zM612,577h1v1h-1zM611,578h1v1h-1zM609,580h1v1h-1zM608,581h1v1h-1zM614,567h1v1h-1zM615,568h1v1h-1zM616,569h1v1h-1zM617,570h1v1h-1zM618,571h1v1h-1zM618,567h1v1h-1zM617,568h1v1h-1zM615,570h1v1h-1zM614,571h1v1h-1zM619,574h1v1h-1zM620,575h1v1h-1zM621,576h1v1h-1zM622,577h1v1h-1zM623,578h1v1h-1zM623,574h1v1h-1zM622,575h1v1h-1zM620,577h1v1h-1zM619,578h1v1h-1zM625,589h1v1h-1zM626,590h1v1h-1zM627,591h1v1h-1zM628,592h1v1h-1zM629,593h1v1h-1zM629,589h1v1h-1zM628,590h1v1h-1zM626,592h1v1h-1zM625,593h1v1h-1zM631,606h1v1h-1zM632,607h1v1h-1zM633,608h1v1h-1zM634,609h1v1h-1zM635,610h1v1h-1zM635,606h1v1h-1zM634,607h1v1h-1zM632,609h1v1h-1zM631,610h1v1h-1zM637,620h1v1h-1zM638,621h1v1h-1zM639,622h1v1h-1zM640,623h1v1h-1zM641,624h1v1h-1zM641,620h1v1h-1zM640,621h1v1h-1zM638,623h1v1h-1zM637,624h1v1h-1zM642,631h1v1h-1zM643,632h1v1h-1zM644,633h1v1h-1zM645,634h1v1h-1zM646,635h1v1h-1zM646,631h1v1h-1zM645,632h1v1h-1zM643,634h1v1h-1zM642,635h1v1h-1zM648,636h1v1h-1zM649,637h1v1h-1zM650,638h1v1h-1zM651,639h1v1h-1zM652,640h1v1h-1zM652,636h1v1h-1zM651,637h1v1h-1zM649,639h1v1h-1zM648,640h1v1h-1zM654,649h1v1h-1zM655,650h1v1h-1zM656,651h1v1h-1zM657,652h1v1h-1zM658,653h1v1h-1zM658,649h1v1h-1zM657,650h1v1h-1zM655,652h1v1h-1zM654,653h1v1h-1zM660,660h1v1h-1zM661,661h1v1h-1zM662,662h1v1h-1zM663,663h1v1h-1zM664,664h1v1h-1zM664,660h1v1h-1zM663,661h1v1h-1zM661,663h1v1h-1zM660,664h1v1h-1zM666,672h1v1h-1zM667,673h1v1h-1zM668,674h1v1h-1zM669,675h1v1h-1zM670,676h1v1h-1zM670,672h1v1h-1zM669,673h1v1h-1zM667,675h1v1h-1zM666,676h1v1h-1zM671,680h1v1h-1zM672,681h1v1h-1zM673,682h1v1h-1zM674,683h1v1h-1zM675,684h1v1h-1zM675,680h1v1h-1zM674,681h1v1h-1zM672,683h1v1h-1zM671,684h1v1h-1zM677,684h1v1h-1zM678,685h1v1h-1zM679,686h1v1h-1zM680,687h1v1h-1zM681,688h1v1h-1zM681,684h1v1h-1zM680,685h1v1h-1zM678,687h1v1h-1zM677,688h1v1h-1zM683,695h1v1h-1zM684,696h1v1h-1zM685,697h1v1h-1zM686,698h1v1h-1zM687,699h1v1h-1zM687,695h1v1h-1zM686,696h1v1h-1zM684,698h1v1h-1zM683,699h1v1h-1zM689,713h1v1h-1zM690,714h1v1h-1zM691,715h1v1h-1zM692,716h1v1h-1zM693,717h1v1h-1zM693,713h1v1h-1zM692,714h1v1h-1zM690,716h1v1h-1zM689,717h1v1h-1zM695,728h1v1h-1zM696,729h1v1h-1zM697,730h1v1h-1zM698,731h1v1h-1zM699,732h1v1h-1zM699,728h1v1h-1zM698,729h1v1h-1zM696,731h1v1h-1zM695,732h1v1h-1zM700,745h1v1h-1zM701,746h1v1h-1zM702,747h1v1h-1zM703,748h1v1h-1zM704,749h1v1h-1zM704,745h1v1h-1zM703,746h1v1h-1zM701,748h1v1h-1zM700,749h1v1h-1zM706,759h1v1h-1zM707,760h1v1h-1zM708,761h1v1h-1zM709,762h1v1h-1zM710,763h1v1h-1zM710,759h1v1h-1zM709,760h1v1h-1zM707,762h1v1h-1zM706,763h1v1h-1zM712,770h1v1h-1zM713,771h1v1h-1zM714,772h1v1h-1zM715,773h1v1h-1zM716,774h1v1h-1zM716,770h1v1h-1zM715,771h1v1h-1zM713,773h1v1h-1zM712,774h1v1h-1zM718,782h1v1h-1zM719,783h1v1h-1zM720,784h1v1h-1zM721,785h1v1h-1zM722,786h1v1h-1zM722,782h1v1h-1zM721,783h1v1h-1zM719,785h1v1h-1zM718,786h1v1h-1zM724,790h1v1h-1zM725,791h1v1h-1zM726,792h1v1h-1zM727,793h1v1h-1zM728,794h1v1h-1zM728,790h1v1h-1zM727,791h1v1h-1zM725,793h1v1h-1zM724,794h1v1h-1zM729,797h1v1h-1zM730,798h1v1h-1zM731,799h1v1h-1zM732,800h1v1h-1zM733,801h1v1h-1zM733,797h1v1h-1zM732,798h1v1h-1zM730,800h1v1h-1zM729,801h1v1h-1zM735,804h1v1h-1zM736,805h1v1h-1zM737,806h1v1h-1zM738,807h1v1h-1zM739,808h1v1h-1zM739,804h1v1h-1zM738,805h1v1h-1zM736,807h1v1h-1zM735,808h1v1h-1zM741,801h1v1h-1zM742,802h1v1h-1zM743,803h1v1h-1zM744,804h1v1h-1zM745,805h1v1h-1zM745,801h1v1h-1zM744,802h1v1h-1zM742,804h1v1h-1zM741,805h1v1h-1zM747,792h1v1h-1zM748,793h1v1h-1zM749,794h1v1h-1zM750,795h1v1h-1zM751,796h1v1h-1zM751,792h1v1h-1zM750,793h1v1h-1zM748,795h1v1h-1zM747,796h1v1h-1zM752,789h1v1h-1zM753,790h1v1h-1zM754,791h1v1h-1zM755,792h1v1h-1zM756,793h1v1h-1zM756,789h1v1h-1zM755,790h1v1h-1zM753,792h1v1h-1zM752,793h1v1h-1zM758,778h1v1h-1zM759,779h1v1h-1zM760,780h1v1h-1zM761,781h1v1h-1zM762,782h1v1h-1zM762,778h1v1h-1zM761,779h1v1h-1zM759,781h1v1h-1zM758,782h1v1h-1zM764,769h1v1h-1zM765,770h1v1h-1zM766,771h1v1h-1zM767,772h1v1h-1zM768,773h1v1h-1zM768,769h1v1h-1zM767,770h1v1h-1zM765,772h1v1h-1zM764,773h1v1h-1zM770,759h1v1h-1zM771,760h1v1h-1zM772,761h1v1h-1zM773,762h1v1h-1zM774,763h1v1h-1zM774,759h1v1h-1zM773,760h1v1h-1zM771,762h1v1h-1zM770,763h1v1h-1zM776,753h1v1h-1zM777,754h1v1h-1zM778,755h1v1h-1zM779,756h1v1h-1zM780,757h1v1h-1zM780,753h1v1h-1zM779,754h1v1h-1zM777,756h1v1h-1zM776,757h1v1h-1zM781,744h1v1h-1zM782,745h1v1h-1zM783,746h1v1h-1zM784,747h1v1h-1zM785,748h1v1h-1zM785,744h1v1h-1zM784,745h1v1h-1zM782,747h1v1h-1zM781,748h1v1h-1zM787,739h1v1h-1zM788,740h1v1h-1zM789,741h1v1h-1zM790,742h1v1h-1zM791,743h1v1h-1zM791,739h1v1h-1zM790,740h1v1h-1zM788,742h1v1h-1zM787,743h1v1h-1zM793,743h1v1h-1zM794,744h1v1h-1zM795,745h1v1h-1zM796,746h1v1h-1zM797,747h1v1h-1zM797,743h1v1h-1zM796,744h1v1h-1zM794,746h1v1h-1zM793,747h1v1h-1zM799,745h1v1h-1zM800,746h1v1h-1zM801,747h1v1h-1zM802,748h1v1h-1zM803,749h1v1h-1zM803,745h1v1h-1zM802,746h1v1h-1zM800,748h1v1h-1zM799,749h1v1h-1zM805,734h1v1h-1zM806,735h1v1h-1zM807,736h1v1h-1zM808,737h1v1h-1zM809,738h1v1h-1zM809,734h1v1h-1zM808,735h1v1h-1zM806,737h1v1h-1zM805,738h1v1h-1zM810,726h1v1h-1zM811,727h1v1h-1zM812,728h1v1h-1zM813,729h1v1h-1zM814,730h1v1h-1zM814,726h1v1h-1zM813,727h1v1h-1zM811,729h1v1h-1zM810,730h1v1h-1zM816,717h1v1h-1zM817,718h1v1h-1zM818,719h1v1h-1zM819,720h1v1h-1zM820,721h1v1h-1zM820,717h1v1h-1zM819,718h1v1h-1zM817,720h1v1h-1zM816,721h1v1h-1zM822,713h1v1h-1zM823,714h1v1h-1zM824,715h1v1h-1zM825,716h1v1h-1zM826,717h1v1h-1zM826,713h1v1h-1zM825,714h1v1h-1zM823,716h1v1h-1zM822,717h1v1h-1zM828,695h1v1h-1zM829,696h1v1h-1zM830,697h1v1h-1zM831,698h1v1h-1zM832,699h1v1h-1zM832,695h1v1h-1zM831,696h1v1h-1zM829,698h1v1h-1zM828,699h1v1h-1zM834,687h1v1h-1zM835,688h1v1h-1zM836,689h1v1h-1zM837,690h1v1h-1zM838,691h1v1h-1zM838,687h1v1h-1zM837,688h1v1h-1zM835,690h1v1h-1zM834,691h1v1h-1zM839,674h1v1h-1zM840,675h1v1h-1zM841,676h1v1h-1zM842,677h1v1h-1zM843,678h1v1h-1zM843,674h1v1h-1zM842,675h1v1h-1zM840,677h1v1h-1zM839,678h1v1h-1zM845,652h1v1h-1zM846,653h1v1h-1zM847,654h1v1h-1zM848,655h1v1h-1zM849,656h1v1h-1zM849,652h1v1h-1zM848,653h1v1h-1zM846,655h1v1h-1zM845,656h1v1h-1zM851,639h1v1h-1zM852,640h1v1h-1zM853,641h1v1h-1zM854,642h1v1h-1zM855,643h1v1h-1zM855,639h1v1h-1zM854,640h1v1h-1zM852,642h1v1h-1zM851,643h1v1h-1zM857,623h1v1h-1zM858,624h1v1h-1zM859,625h1v1h-1zM860,626h1v1h-1zM861,627h1v1h-1zM861,623h1v1h-1zM860,624h1v1h-1zM858,626h1v1h-1zM857,627h1v1h-1zM862,607h1v1h-1zM863,608h1v1h-1zM864,609h1v1h-1zM865,610h1v1h-1zM866,611h1v1h-1zM866,607h1v1h-1zM865,608h1v1h-1zM863,610h1v1h-1zM862,611h1v1h-1zM868,596h1v1h-1zM869,597h1v1h-1zM870,598h1v1h-1zM871,599h1v1h-1zM872,600h1v1h-1zM872,596h1v1h-1zM871,597h1v1h-1zM869,599h1v1h-1zM868,600h1v1h-1zM874,582h1v1h-1zM875,583h1v1h-1zM876,584h1v1h-1zM877,585h1v1h-1zM878,586h1v1h-1zM878,582h1v1h-1zM877,583h1v1h-1zM875,585h1v1h-1zM874,586h1v1h-1zM880,573h1v1h-1zM881,574h1v1h-1zM882,575h1v1h-1zM883,576h1v1h-1zM884,577h1v1h-1zM884,573h1v1h-1zM883,574h1v1h-1zM881,576h1v1h-1zM880,577h1v1h-1zM886,564h1v1h-1zM887,565h1v1h-1zM888,566h1v1h-1zM889,567h1v1h-1zM890,568h1v1h-1zM890,564h1v1h-1zM889,565h1v1h-1zM887,567h1v1h-1zM886,568h1v1h-1zM891,574h1v1h-1zM892,575h1v1h-1zM893,576h1v1h-1zM894,577h1v1h-1zM895,578h1v1h-1zM895,574h1v1h-1zM894,575h1v1h-1zM892,577h1v1h-1zM891,578h1v1h-1zM897,593h1v1h-1zM898,594h1v1h-1zM899,595h1v1h-1zM900,596h1v1h-1zM901,597h1v1h-1zM901,593h1v1h-1zM900,594h1v1h-1zM898,596h1v1h-1zM897,597h1v1h-1zM903,597h1v1h-1zM904,598h1v1h-1zM905,599h1v1h-1zM906,600h1v1h-1zM907,601h1v1h-1zM907,597h1v1h-1zM906,598h1v1h-1zM904,600h1v1h-1zM903,601h1v1h-1zM909,603h1v1h-1zM910,604h1v1h-1zM911,605h1v1h-1zM912,606h1v1h-1zM913,607h1v1h-1zM913,603h1v1h-1zM912,604h1v1h-1zM910,606h1v1h-1zM909,607h1v1h-1zM915,606h1v1h-1zM916,607h1v1h-1zM917,608h1v1h-1zM918,609h1v1h-1zM919,610h1v1h-1zM919,606h1v1h-1zM918,607h1v1h-1zM916,609h1v1h-1zM915,610h1v1h-1zM920,604h1v1h-1zM921,605h1v1h-1zM922,606h1v1h-1zM923,607h1v1h-1zM924,608h1v1h-1zM924,604h1v1h-1zM923,605h1v1h-1zM921,607h1v1h-1zM920,608h1v1h-1zM926,598h1v1h-1zM927,599h1v1h-1zM928,600h1v1h-1zM929,601h1v1h-1zM930,602h1v1h-1zM930,598h1v1h-1zM929,599h1v1h-1zM927,601h1v1h-1zM926,602h1v1h-1zM932,597h1v1h-1zM933,598h1v1h-1zM934,599h1v1h-1zM935,600h1v1h-1zM936,601h1v1h-1zM936,597h1v1h-1zM935,598h1v1h-1zM933,600h1v1h-1zM932,601h1v1h-1zM938,604h1v1h-1zM939,605h1v1h-1zM940,606h1v1h-1zM941,607h1v1h-1zM942,608h1v1h-1zM942,604h1v1h-1zM941,605h1v1h-1zM939,607h1v1h-1zM938,608h1v1h-1zM944,613h1v1h-1zM945,614h1v1h-1zM946,615h1v1h-1zM947,616h1v1h-1zM948,617h1v1h-1zM948,613h1v1h-1zM947,614h1v1h-1zM945,616h1v1h-1zM944,617h1v1h-1zM949,628h1v1h-1zM950,629h1v1h-1zM951,630h1v1h-1zM952,631h1v1h-1zM953,632h1v1h-1zM953,628h1v1h-1zM952,629h1v1h-1zM950,631h1v1h-1zM949,632h1v1h-1zM955,623h1v1h-1zM956,624h1v1h-1zM957,625h1v1h-1zM958,626h1v1h-1zM959,627h1v1h-1zM959,623h1v1h-1zM958,624h1v1h-1zM956,626h1v1h-1zM955,627h1v1h-1zM961,638h1v1h-1zM962,639h1v1h-1zM963,640h1v1h-1zM964,641h1v1h-1zM965,642h1v1h-1zM965,638h1v1h-1zM964,639h1v1h-1zM962,641h1v1h-1zM961,642h1v1h-1zM967,642h1v1h-1zM968,643h1v1h-1zM969,644h1v1h-1zM970,645h1v1h-1zM971,646h1v1h-1zM971,642h1v1h-1zM970,643h1v1h-1zM968,645h1v1h-1zM967,646h1v1h-1zM972,655h1v1h-1zM973,656h1v1h-1zM974,657h1v1h-1zM975,658h1v1h-1zM976,659h1v1h-1zM976,655h1v1h-1zM975,656h1v1h-1zM973,658h1v1h-1zM972,659h1v1h-1zM978,669h1v1h-1zM979,670h1v1h-1zM980,671h1v1h-1zM981,672h1v1h-1zM982,673h1v1h-1zM982,669h1v1h-1zM981,670h1v1h-1zM979,672h1v1h-1zM978,673h1v1h-1zM984,683h1v1h-1zM985,684h1v1h-1zM986,685h1v1h-1zM987,686h1v1h-1zM988,687h1v1h-1zM988,683h1v1h-1zM987,684h1v1h-1zM985,686h1v1h-1zM984,687h1v1h-1zM990,703h1v1h-1zM991,704h1v1h-1zM992,705h1v1h-1zM993,706h1v1h-1zM994,707h1v1h-1zM994,703h1v1h-1zM993,704h1v1h-1zM991,706h1v1h-1zM990,707h1v1h-1zM996,721h1v1h-1zM997,722h1v1h-1zM998,723h1v1h-1zM999,724h1v1h-1zM1000,725h1v1h-1zM1000,721h1v1h-1zM999,722h1v1h-1zM997,724h1v1h-1zM996,725h1v1h-1zM1001,735h1v1h-1zM1002,736h1v1h-1zM1003,737h1v1h-1zM1004,738h1v1h-1zM1005,739h1v1h-1zM1005,735h1v1h-1zM1004,736h1v1h-1zM1002,738h1v1h-1zM1001,739h1v1h-1zM1007,749h1v1h-1zM1008,750h1v1h-1zM1009,751h1v1h-1zM1010,752h1v1h-1zM1011,753h1v1h-1zM1011,749h1v1h-1zM1010,750h1v1h-1zM1008,752h1v1h-1zM1007,753h1v1h-1zM1013,763h1v1h-1zM1014,764h1v1h-1zM1015,765h1v1h-1zM1016,766h1v1h-1zM1017,767h1v1h-1zM1017,763h1v1h-1zM1016,764h1v1h-1zM1014,766h1v1h-1zM1013,767h1v1h-1zM1019,775h1v1h-1zM1020,776h1v1h-1zM1021,777h1v1h-1zM1022,778h1v1h-1zM1023,779h1v1h-1zM1023,775h1v1h-1zM1022,776h1v1h-1zM1020,778h1v1h-1zM1019,779h1v1h-1zM1025,785h1v1h-1zM1026,786h1v1h-1zM1027,787h1v1h-1zM1028,788h1v1h-1zM1029,789h1v1h-1zM1029,785h1v1h-1zM1028,786h1v1h-1zM1026,788h1v1h-1zM1025,789h1v1h-1zM1030,794h1v1h-1zM1031,795h1v1h-1zM1032,796h1v1h-1zM1033,797h1v1h-1zM1034,798h1v1h-1zM1034,794h1v1h-1zM1033,795h1v1h-1zM1031,797h1v1h-1zM1030,798h1v1h-1zM1036,803h1v1h-1zM1037,804h1v1h-1zM1038,805h1v1h-1zM1039,806h1v1h-1zM1040,807h1v1h-1zM1040,803h1v1h-1zM1039,804h1v1h-1zM1037,806h1v1h-1zM1036,807h1v1h-1zM1042,815h1v1h-1zM1043,816h1v1h-1zM1044,817h1v1h-1zM1045,818h1v1h-1zM1046,819h1v1h-1zM1046,815h1v1h-1zM1045,816h1v1h-1zM1043,818h1v1h-1zM1042,819h1v1h-1zM1048,825h1v1h-1zM1049,826h1v1h-1zM1050,827h1v1h-1zM1051,828h1v1h-1zM1052,829h1v1h-1zM1052,825h1v1h-1zM1051,826h1v1h-1zM1049,828h1v1h-1zM1048,829h1v1h-1zM1054,831h1v1h-1zM1055,832h1v1h-1zM1056,833h1v1h-1zM1057,834h1v1h-1zM1058,835h1v1h-1zM1058,831h1v1h-1zM1057,832h1v1h-1zM1055,834h1v1h-1zM1054,835h1v1h-1zM1059,829h1v1h-1zM1060,830h1v1h-1zM1061,831h1v1h-1zM1062,832h1v1h-1zM1063,833h1v1h-1zM1063,829h1v1h-1zM1062,830h1v1h-1zM1060,832h1v1h-1zM1059,833h1v1h-1zM1065,825h1v1h-1zM1066,826h1v1h-1zM1067,827h1v1h-1zM1068,828h1v1h-1zM1069,829h1v1h-1zM1069,825h1v1h-1zM1068,826h1v1h-1zM1066,828h1v1h-1zM1065,829h1v1h-1zM1071,822h1v1h-1zM1072,823h1v1h-1zM1073,824h1v1h-1zM1074,825h1v1h-1zM1075,826h1v1h-1zM1075,822h1v1h-1zM1074,823h1v1h-1zM1072,825h1v1h-1zM1071,826h1v1h-1zM1077,819h1v1h-1zM1078,820h1v1h-1zM1079,821h1v1h-1zM1080,822h1v1h-1zM1081,823h1v1h-1zM1081,819h1v1h-1zM1080,820h1v1h-1zM1078,822h1v1h-1zM1077,823h1v1h-1zM1082,820h1v1h-1zM1083,821h1v1h-1zM1084,822h1v1h-1zM1085,823h1v1h-1zM1086,824h1v1h-1zM1086,820h1v1h-1zM1085,821h1v1h-1zM1083,823h1v1h-1zM1082,824h1v1h-1zM1088,821h1v1h-1zM1089,822h1v1h-1zM1090,823h1v1h-1zM1091,824h1v1h-1zM1092,825h1v1h-1zM1092,821h1v1h-1zM1091,822h1v1h-1zM1089,824h1v1h-1zM1088,825h1v1h-1zM1094,822h1v1h-1zM1095,823h1v1h-1zM1096,824h1v1h-1zM1097,825h1v1h-1zM1098,826h1v1h-1zM1098,822h1v1h-1zM1097,823h1v1h-1zM1095,825h1v1h-1zM1094,826h1v1h-1zM1100,818h1v1h-1zM1101,819h1v1h-1zM1102,820h1v1h-1zM1103,821h1v1h-1zM1104,822h1v1h-1zM1104,818h1v1h-1zM1103,819h1v1h-1zM1101,821h1v1h-1zM1100,822h1v1h-1zM1106,815h1v1h-1zM1107,816h1v1h-1zM1108,817h1v1h-1zM1109,818h1v1h-1zM1110,819h1v1h-1zM1110,815h1v1h-1zM1109,816h1v1h-1zM1107,818h1v1h-1zM1106,819h1v1h-1zM1111,809h1v1h-1zM1112,810h1v1h-1zM1113,811h1v1h-1zM1114,812h1v1h-1zM1115,813h1v1h-1zM1115,809h1v1h-1zM1114,810h1v1h-1zM1112,812h1v1h-1zM1111,813h1v1h-1zM1117,807h1v1h-1zM1118,808h1v1h-1zM1119,809h1v1h-1zM1120,810h1v1h-1zM1121,811h1v1h-1zM1121,807h1v1h-1zM1120,808h1v1h-1zM1118,810h1v1h-1zM1117,811h1v1h-1zM1123,804h1v1h-1zM1124,805h1v1h-1zM1125,806h1v1h-1zM1126,807h1v1h-1zM1127,808h1v1h-1zM1127,804h1v1h-1zM1126,805h1v1h-1zM1124,807h1v1h-1zM1123,808h1v1h-1zM1129,809h1v1h-1zM1130,810h1v1h-1zM1131,811h1v1h-1zM1132,812h1v1h-1zM1133,813h1v1h-1zM1133,809h1v1h-1zM1132,810h1v1h-1zM1130,812h1v1h-1zM1129,813h1v1h-1zM1135,803h1v1h-1zM1136,804h1v1h-1zM1137,805h1v1h-1zM1138,806h1v1h-1zM1139,807h1v1h-1zM1139,803h1v1h-1zM1138,804h1v1h-1zM1136,806h1v1h-1zM1135,807h1v1h-1zM1140,792h1v1h-1zM1141,793h1v1h-1zM1142,794h1v1h-1zM1143,795h1v1h-1zM1144,796h1v1h-1zM1144,792h1v1h-1zM1143,793h1v1h-1zM1141,795h1v1h-1zM1140,796h1v1h-1zM1146,781h1v1h-1zM1147,782h1v1h-1zM1148,783h1v1h-1zM1149,784h1v1h-1zM1150,785h1v1h-1zM1150,781h1v1h-1zM1149,782h1v1h-1zM1147,784h1v1h-1zM1146,785h1v1h-1zM1152,769h1v1h-1zM1153,770h1v1h-1zM1154,771h1v1h-1zM1155,772h1v1h-1zM1156,773h1v1h-1zM1156,769h1v1h-1zM1155,770h1v1h-1zM1153,772h1v1h-1zM1152,773h1v1h-1zM1158,757h1v1h-1zM1159,758h1v1h-1zM1160,759h1v1h-1zM1161,760h1v1h-1zM1162,761h1v1h-1zM1162,757h1v1h-1zM1161,758h1v1h-1zM1159,760h1v1h-1zM1158,761h1v1h-1zM1164,755h1v1h-1zM1165,756h1v1h-1zM1166,757h1v1h-1zM1167,758h1v1h-1zM1168,759h1v1h-1zM1168,755h1v1h-1zM1167,756h1v1h-1zM1165,758h1v1h-1zM1164,759h1v1h-1zM1169,748h1v1h-1zM1170,749h1v1h-1zM1171,750h1v1h-1zM1172,751h1v1h-1zM1173,752h1v1h-1zM1173,748h1v1h-1zM1172,749h1v1h-1zM1170,751h1v1h-1zM1169,752h1v1h-1zM1175,745h1v1h-1zM1176,746h1v1h-1zM1177,747h1v1h-1zM1178,748h1v1h-1zM1179,749h1v1h-1zM1179,745h1v1h-1zM1178,746h1v1h-1zM1176,748h1v1h-1zM1175,749h1v1h-1zM1181,745h1v1h-1zM1182,746h1v1h-1zM1183,747h1v1h-1zM1184,748h1v1h-1zM1185,749h1v1h-1zM1185,745h1v1h-1zM1184,746h1v1h-1zM1182,748h1v1h-1zM1181,749h1v1h-1zM1187,746h1v1h-1zM1188,747h1v1h-1zM1189,748h1v1h-1zM1190,749h1v1h-1zM1191,750h1v1h-1zM1191,746h1v1h-1zM1190,747h1v1h-1zM1188,749h1v1h-1zM1187,750h1v1h-1zM1192,745h1v1h-1zM1193,746h1v1h-1zM1194,747h1v1h-1zM1195,748h1v1h-1zM1196,749h1v1h-1zM1196,745h1v1h-1zM1195,746h1v1h-1zM1193,748h1v1h-1zM1192,749h1v1h-1zM1198,745h1v1h-1zM1199,746h1v1h-1zM1200,747h1v1h-1zM1201,748h1v1h-1zM1202,749h1v1h-1zM1202,745h1v1h-1zM1201,746h1v1h-1zM1199,748h1v1h-1zM1198,749h1v1h-1zM1204,739h1v1h-1zM1205,740h1v1h-1zM1206,741h1v1h-1zM1207,742h1v1h-1zM1208,743h1v1h-1zM1208,739h1v1h-1zM1207,740h1v1h-1zM1205,742h1v1h-1zM1204,743h1v1h-1zM1210,724h1v1h-1zM1211,725h1v1h-1zM1212,726h1v1h-1zM1213,727h1v1h-1zM1214,728h1v1h-1zM1214,724h1v1h-1zM1213,725h1v1h-1zM1211,727h1v1h-1zM1210,728h1v1h-1zM1216,715h1v1h-1zM1217,716h1v1h-1zM1218,717h1v1h-1zM1219,718h1v1h-1zM1220,719h1v1h-1zM1220,715h1v1h-1zM1219,716h1v1h-1zM1217,718h1v1h-1zM1216,719h1v1h-1zM1221,702h1v1h-1zM1222,703h1v1h-1zM1223,704h1v1h-1zM1224,705h1v1h-1zM1225,706h1v1h-1zM1225,702h1v1h-1zM1224,703h1v1h-1zM1222,705h1v1h-1zM1221,706h1v1h-1zM1227,686h1v1h-1zM1228,687h1v1h-1zM1229,688h1v1h-1zM1230,689h1v1h-1zM1231,690h1v1h-1zM1231,686h1v1h-1zM1230,687h1v1h-1zM1228,689h1v1h-1zM1227,690h1v1h-1zM1233,678h1v1h-1zM1234,679h1v1h-1zM1235,680h1v1h-1zM1236,681h1v1h-1zM1237,682h1v1h-1zM1237,678h1v1h-1zM1236,679h1v1h-1zM1234,681h1v1h-1zM1233,682h1v1h-1zM1239,675h1v1h-1zM1240,676h1v1h-1zM1241,677h1v1h-1zM1242,678h1v1h-1zM1243,679h1v1h-1zM1243,675h1v1h-1zM1242,676h1v1h-1zM1240,678h1v1h-1zM1239,679h1v1h-1zM1245,673h1v1h-1zM1246,674h1v1h-1zM1247,675h1v1h-1zM1248,676h1v1h-1zM1249,677h1v1h-1zM1249,673h1v1h-1zM1248,674h1v1h-1zM1246,676h1v1h-1zM1245,677h1v1h-1zM1250,673h1v1h-1zM1251,674h1v1h-1zM1252,675h1v1h-1zM1253,676h1v1h-1zM1254,677h1v1h-1zM1254,673h1v1h-1zM1253,674h1v1h-1zM1251,676h1v1h-1zM1250,677h1v1h-1zM1256,675h1v1h-1zM1257,676h1v1h-1zM1258,677h1v1h-1zM1259,678h1v1h-1zM1260,679h1v1h-1zM1260,675h1v1h-1zM1259,676h1v1h-1zM1257,678h1v1h-1zM1256,679h1v1h-1zM1262,677h1v1h-1zM1263,678h1v1h-1zM1264,679h1v1h-1zM1265,680h1v1h-1zM1266,681h1v1h-1zM1266,677h1v1h-1zM1265,678h1v1h-1zM1263,680h1v1h-1zM1262,681h1v1h-1zM1268,678h1v1h-1zM1269,679h1v1h-1zM1270,680h1v1h-1zM1271,681h1v1h-1zM1272,682h1v1h-1zM1272,678h1v1h-1zM1271,679h1v1h-1zM1269,681h1v1h-1zM1268,682h1v1h-1zM1274,682h1v1h-1zM1275,683h1v1h-1zM1276,684h1v1h-1zM1277,685h1v1h-1zM1278,686h1v1h-1zM1278,682h1v1h-1zM1277,683h1v1h-1zM1275,685h1v1h-1zM1274,686h1v1h-1zM1279,676h1v1h-1zM1280,677h1v1h-1zM1281,678h1v1h-1zM1282,679h1v1h-1zM1283,680h1v1h-1zM1283,676h1v1h-1zM1282,677h1v1h-1zM1280,679h1v1h-1zM1279,680h1v1h-1zM1285,683h1v1h-1zM1286,684h1v1h-1zM1287,685h1v1h-1zM1288,686h1v1h-1zM1289,687h1v1h-1zM1289,683h1v1h-1zM1288,684h1v1h-1zM1286,686h1v1h-1zM1285,687h1v1h-1zM1291,691h1v1h-1zM1292,692h1v1h-1zM1293,693h1v1h-1zM1294,694h1v1h-1zM1295,695h1v1h-1zM1295,691h1v1h-1zM1294,692h1v1h-1zM1292,694h1v1h-1zM1291,695h1v1h-1zM1297,680h1v1h-1zM1298,681h1v1h-1zM1299,682h1v1h-1zM1300,683h1v1h-1zM1301,684h1v1h-1zM1301,680h1v1h-1zM1300,681h1v1h-1zM1298,683h1v1h-1zM1297,684h1v1h-1zM1302,689h1v1h-1zM1303,690h1v1h-1zM1304,691h1v1h-1zM1305,692h1v1h-1zM1306,693h1v1h-1zM1306,689h1v1h-1zM1305,690h1v1h-1zM1303,692h1v1h-1zM1302,693h1v1h-1zM1308,679h1v1h-1zM1309,680h1v1h-1zM1310,681h1v1h-1zM1311,682h1v1h-1zM1312,683h1v1h-1zM1312,679h1v1h-1zM1311,680h1v1h-1zM1309,682h1v1h-1zM1308,683h1v1h-1zM1314,678h1v1h-1zM1315,679h1v1h-1zM1316,680h1v1h-1zM1317,681h1v1h-1zM1318,682h1v1h-1zM1318,678h1v1h-1zM1317,679h1v1h-1zM1315,681h1v1h-1zM1314,682h1v1h-1zM1320,691h1v1h-1zM1321,692h1v1h-1zM1322,693h1v1h-1zM1323,694h1v1h-1zM1324,695h1v1h-1zM1324,691h1v1h-1zM1323,692h1v1h-1zM1321,694h1v1h-1zM1320,695h1v1h-1zM1326,707h1v1h-1zM1327,708h1v1h-1zM1328,709h1v1h-1zM1329,710h1v1h-1zM1330,711h1v1h-1zM1330,707h1v1h-1zM1329,708h1v1h-1zM1327,710h1v1h-1zM1326,711h1v1h-1zM1331,719h1v1h-1zM1332,720h1v1h-1zM1333,721h1v1h-1zM1334,722h1v1h-1zM1335,723h1v1h-1zM1335,719h1v1h-1zM1334,720h1v1h-1zM1332,722h1v1h-1zM1331,723h1v1h-1zM1337,729h1v1h-1zM1338,730h1v1h-1zM1339,731h1v1h-1zM1340,732h1v1h-1zM1341,733h1v1h-1zM1341,729h1v1h-1zM1340,730h1v1h-1zM1338,732h1v1h-1zM1337,733h1v1h-1zM1343,708h1v1h-1zM1344,709h1v1h-1zM1345,710h1v1h-1zM1346,711h1v1h-1zM1347,712h1v1h-1zM1347,708h1v1h-1zM1346,709h1v1h-1zM1344,711h1v1h-1zM1343,712h1v1h-1zM1349,685h1v1h-1zM1350,686h1v1h-1zM1351,687h1v1h-1zM1352,688h1v1h-1zM1353,689h1v1h-1zM1353,685h1v1h-1zM1352,686h1v1h-1zM1350,688h1v1h-1zM1349,689h1v1h-1zM1355,663h1v1h-1zM1356,664h1v1h-1zM1357,665h1v1h-1zM1358,666h1v1h-1zM1359,667h1v1h-1zM1359,663h1v1h-1zM1358,664h1v1h-1zM1356,666h1v1h-1zM1355,667h1v1h-1zM1360,653h1v1h-1zM1361,654h1v1h-1zM1362,655h1v1h-1zM1363,656h1v1h-1zM1364,657h1v1h-1zM1364,653h1v1h-1zM1363,654h1v1h-1zM1361,656h1v1h-1zM1360,657h1v1h-1zM1366,635h1v1h-1zM1367,636h1v1h-1zM1368,637h1v1h-1zM1369,638h1v1h-1zM1370,639h1v1h-1zM1370,635h1v1h-1zM1369,636h1v1h-1zM1367,638h1v1h-1zM1366,639h1v1h-1zM1372,622h1v1h-1zM1373,623h1v1h-1zM1374,624h1v1h-1zM1375,625h1v1h-1zM1376,626h1v1h-1zM1376,622h1v1h-1zM1375,623h1v1h-1zM1373,625h1v1h-1zM1372,626h1v1h-1zM1378,614h1v1h-1zM1379,615h1v1h-1zM1380,616h1v1h-1zM1381,617h1v1h-1zM1382,618h1v1h-1zM1382,614h1v1h-1zM1381,615h1v1h-1zM1379,617h1v1h-1zM1378,618h1v1h-1zM1384,611h1v1h-1zM1385,612h1v1h-1zM1386,613h1v1h-1zM1387,614h1v1h-1zM1388,615h1v1h-1zM1388,611h1v1h-1zM1387,612h1v1h-1zM1385,614h1v1h-1zM1384,615h1v1h-1zM1389,610h1v1h-1zM1390,611h1v1h-1zM1391,612h1v1h-1zM1392,613h1v1h-1zM1393,614h1v1h-1zM1393,610h1v1h-1zM1392,611h1v1h-1zM1390,613h1v1h-1zM1389,614h1v1h-1zM1395,603h1v1h-1zM1396,604h1v1h-1zM1397,605h1v1h-1zM1398,606h1v1h-1zM1399,607h1v1h-1zM1399,603h1v1h-1zM1398,604h1v1h-1zM1396,606h1v1h-1zM1395,607h1v1h-1zM1401,604h1v1h-1zM1402,605h1v1h-1zM1403,606h1v1h-1zM1404,607h1v1h-1zM1405,608h1v1h-1zM1405,604h1v1h-1zM1404,605h1v1h-1zM1402,607h1v1h-1zM1401,608h1v1h-1zM1407,611h1v1h-1zM1408,612h1v1h-1zM1409,613h1v1h-1zM1410,614h1v1h-1zM1411,615h1v1h-1zM1411,611h1v1h-1zM1410,612h1v1h-1zM1408,614h1v1h-1zM1407,615h1v1h-1zM1412,622h1v1h-1zM1413,623h1v1h-1zM1414,624h1v1h-1zM1415,625h1v1h-1zM1416,626h1v1h-1zM1416,622h1v1h-1zM1415,623h1v1h-1zM1413,625h1v1h-1zM1412,626h1v1h-1zM1418,627h1v1h-1zM1419,628h1v1h-1zM1420,629h1v1h-1zM1421,630h1v1h-1zM1422,631h1v1h-1zM1422,627h1v1h-1zM1421,628h1v1h-1zM1419,630h1v1h-1zM1418,631h1v1h-1zM1424,615h1v1h-1zM1425,616h1v1h-1zM1426,617h1v1h-1zM1427,618h1v1h-1zM1428,619h1v1h-1zM1428,615h1v1h-1zM1427,616h1v1h-1zM1425,618h1v1h-1zM1424,619h1v1h-1zM1430,600h1v1h-1zM1431,601h1v1h-1zM1432,602h1v1h-1zM1433,603h1v1h-1zM1434,604h1v1h-1zM1434,600h1v1h-1zM1433,601h1v1h-1zM1431,603h1v1h-1zM1430,604h1v1h-1zM1436,586h1v1h-1zM1437,587h1v1h-1zM1438,588h1v1h-1zM1439,589h1v1h-1zM1440,590h1v1h-1zM1440,586h1v1h-1zM1439,587h1v1h-1zM1437,589h1v1h-1zM1436,590h1v1h-1zM1441,573h1v1h-1zM1442,574h1v1h-1zM1443,575h1v1h-1zM1444,576h1v1h-1zM1445,577h1v1h-1zM1445,573h1v1h-1zM1444,574h1v1h-1zM1442,576h1v1h-1zM1441,577h1v1h-1zM1447,569h1v1h-1zM1448,570h1v1h-1zM1449,571h1v1h-1zM1450,572h1v1h-1zM1451,573h1v1h-1zM1451,569h1v1h-1zM1450,570h1v1h-1zM1448,572h1v1h-1zM1447,573h1v1h-1zM1453,559h1v1h-1zM1454,560h1v1h-1zM1455,561h1v1h-1zM1456,562h1v1h-1zM1457,563h1v1h-1zM1457,559h1v1h-1zM1456,560h1v1h-1zM1454,562h1v1h-1zM1453,563h1v1h-1zM1459,554h1v1h-1zM1460,555h1v1h-1zM1461,556h1v1h-1zM1462,557h1v1h-1zM1463,558h1v1h-1zM1463,554h1v1h-1zM1462,555h1v1h-1zM1460,557h1v1h-1zM1459,558h1v1h-1zM1465,551h1v1h-1zM1466,552h1v1h-1zM1467,553h1v1h-1zM1468,554h1v1h-1zM1469,555h1v1h-1zM1469,551h1v1h-1zM1468,552h1v1h-1zM1466,554h1v1h-1zM1465,555h1v1h-1zM1470,560h1v1h-1zM1471,561h1v1h-1zM1472,562h1v1h-1zM1473,563h1v1h-1zM1474,564h1v1h-1zM1474,560h1v1h-1zM1473,561h1v1h-1zM1471,563h1v1h-1zM1470,564h1v1h-1zM1476,572h1v1h-1zM1477,573h1v1h-1zM1478,574h1v1h-1zM1479,575h1v1h-1zM1480,576h1v1h-1zM1480,572h1v1h-1zM1479,573h1v1h-1zM1477,575h1v1h-1zM1476,576h1v1h-1zM1482,585h1v1h-1zM1483,586h1v1h-1zM1484,587h1v1h-1zM1485,588h1v1h-1zM1486,589h1v1h-1zM1486,585h1v1h-1zM1485,586h1v1h-1zM1483,588h1v1h-1zM1482,589h1v1h-1zM1488,600h1v1h-1zM1489,601h1v1h-1zM1490,602h1v1h-1zM1491,603h1v1h-1zM1492,604h1v1h-1zM1492,600h1v1h-1zM1491,601h1v1h-1zM1489,603h1v1h-1zM1488,604h1v1h-1zM1494,614h1v1h-1zM1495,615h1v1h-1zM1496,616h1v1h-1zM1497,617h1v1h-1zM1498,618h1v1h-1zM1498,614h1v1h-1zM1497,615h1v1h-1zM1495,617h1v1h-1zM1494,618h1v1h-1zM1499,629h1v1h-1zM1500,630h1v1h-1zM1501,631h1v1h-1zM1502,632h1v1h-1zM1503,633h1v1h-1zM1503,629h1v1h-1zM1502,630h1v1h-1zM1500,632h1v1h-1zM1499,633h1v1h-1zM1505,642h1v1h-1zM1506,643h1v1h-1zM1507,644h1v1h-1zM1508,645h1v1h-1zM1509,646h1v1h-1zM1509,642h1v1h-1zM1508,643h1v1h-1zM1506,645h1v1h-1zM1505,646h1v1h-1zM1511,642h1v1h-1zM1512,643h1v1h-1zM1513,644h1v1h-1zM1514,645h1v1h-1zM1515,646h1v1h-1zM1515,642h1v1h-1zM1514,643h1v1h-1zM1512,645h1v1h-1zM1511,646h1v1h-1zM1517,634h1v1h-1zM1518,635h1v1h-1zM1519,636h1v1h-1zM1520,637h1v1h-1zM1521,638h1v1h-1zM1521,634h1v1h-1zM1520,635h1v1h-1zM1518,637h1v1h-1zM1517,638h1v1h-1zM1522,621h1v1h-1zM1523,622h1v1h-1zM1524,623h1v1h-1zM1525,624h1v1h-1zM1526,625h1v1h-1zM1526,621h1v1h-1zM1525,622h1v1h-1zM1523,624h1v1h-1zM1522,625h1v1h-1zM1528,628h1v1h-1zM1529,629h1v1h-1zM1530,630h1v1h-1zM1531,631h1v1h-1zM1532,632h1v1h-1zM1532,628h1v1h-1zM1531,629h1v1h-1zM1529,631h1v1h-1zM1528,632h1v1h-1zM1534,644h1v1h-1zM1535,645h1v1h-1zM1536,646h1v1h-1zM1537,647h1v1h-1zM1538,648h1v1h-1zM1538,644h1v1h-1zM1537,645h1v1h-1zM1535,647h1v1h-1zM1534,648h1v1h-1zM1540,646h1v1h-1zM1541,647h1v1h-1zM1542,648h1v1h-1zM1543,649h1v1h-1zM1544,650h1v1h-1zM1544,646h1v1h-1zM1543,647h1v1h-1zM1541,649h1v1h-1zM1540,650h1v1h-1zM1546,657h1v1h-1zM1547,658h1v1h-1zM1548,659h1v1h-1zM1549,660h1v1h-1zM1550,661h1v1h-1zM1550,657h1v1h-1zM1549,658h1v1h-1zM1547,660h1v1h-1zM1546,661h1v1h-1zM1551,663h1v1h-1zM1552,664h1v1h-1zM1553,665h1v1h-1zM1554,666h1v1h-1zM1555,667h1v1h-1zM1555,663h1v1h-1zM1554,664h1v1h-1zM1552,666h1v1h-1zM1551,667h1v1h-1zM1557,681h1v1h-1zM1558,682h1v1h-1zM1559,683h1v1h-1zM1560,684h1v1h-1zM1561,685h1v1h-1zM1561,681h1v1h-1zM1560,682h1v1h-1zM1558,684h1v1h-1zM1557,685h1v1h-1zM1563,693h1v1h-1zM1564,694h1v1h-1zM1565,695h1v1h-1zM1566,696h1v1h-1zM1567,697h1v1h-1zM1567,693h1v1h-1zM1566,694h1v1h-1zM1564,696h1v1h-1zM1563,697h1v1h-1zM1569,700h1v1h-1zM1570,701h1v1h-1zM1571,702h1v1h-1zM1572,703h1v1h-1zM1573,704h1v1h-1zM1573,700h1v1h-1zM1572,701h1v1h-1zM1570,703h1v1h-1zM1569,704h1v1h-1zM1575,696h1v1h-1zM1576,697h1v1h-1zM1577,698h1v1h-1zM1578,699h1v1h-1zM1579,700h1v1h-1zM1579,696h1v1h-1zM1578,697h1v1h-1zM1576,699h1v1h-1zM1575,700h1v1h-1zM1580,696h1v1h-1zM1581,697h1v1h-1zM1582,698h1v1h-1zM1583,699h1v1h-1zM1584,700h1v1h-1zM1584,696h1v1h-1zM1583,697h1v1h-1zM1581,699h1v1h-1zM1580,700h1v1h-1zM1586,704h1v1h-1zM1587,705h1v1h-1zM1588,706h1v1h-1zM1589,707h1v1h-1zM1590,708h1v1h-1zM1590,704h1v1h-1zM1589,705h1v1h-1zM1587,707h1v1h-1zM1586,708h1v1h-1zM1592,718h1v1h-1zM1593,719h1v1h-1zM1594,720h1v1h-1zM1595,721h1v1h-1zM1596,722h1v1h-1zM1596,718h1v1h-1zM1595,719h1v1h-1zM1593,721h1v1h-1zM1592,722h1v1h-1zM1598,734h1v1h-1zM1599,735h1v1h-1zM1600,736h1v1h-1zM1601,737h1v1h-1zM1602,738h1v1h-1zM1602,734h1v1h-1zM1601,735h1v1h-1zM1599,737h1v1h-1zM1598,738h1v1h-1zM1604,747h1v1h-1zM1605,748h1v1h-1zM1606,749h1v1h-1zM1607,750h1v1h-1zM1608,751h1v1h-1zM1608,747h1v1h-1zM1607,748h1v1h-1zM1605,750h1v1h-1zM1604,751h1v1h-1zM1609,760h1v1h-1zM1610,761h1v1h-1zM1611,762h1v1h-1zM1612,763h1v1h-1zM1613,764h1v1h-1zM1613,760h1v1h-1zM1612,761h1v1h-1zM1610,763h1v1h-1zM1609,764h1v1h-1zM1615,771h1v1h-1zM1616,772h1v1h-1zM1617,773h1v1h-1zM1618,774h1v1h-1zM1619,775h1v1h-1zM1619,771h1v1h-1zM1618,772h1v1h-1zM1616,774h1v1h-1zM1615,775h1v1h-1zM1621,782h1v1h-1zM1622,783h1v1h-1zM1623,784h1v1h-1zM1624,785h1v1h-1zM1625,786h1v1h-1zM1625,782h1v1h-1zM1624,783h1v1h-1zM1622,785h1v1h-1zM1621,786h1v1h-1zM1627,792h1v1h-1zM1628,793h1v1h-1zM1629,794h1v1h-1zM1630,795h1v1h-1zM1631,796h1v1h-1zM1631,792h1v1h-1zM1630,793h1v1h-1zM1628,795h1v1h-1zM1627,796h1v1h-1zM1632,800h1v1h-1zM1633,801h1v1h-1zM1634,802h1v1h-1zM1635,803h1v1h-1zM1636,804h1v1h-1zM1636,800h1v1h-1zM1635,801h1v1h-1zM1633,803h1v1h-1zM1632,804h1v1h-1zM1638,792h1v1h-1zM1639,793h1v1h-1zM1640,794h1v1h-1zM1641,795h1v1h-1zM1642,796h1v1h-1zM1642,792h1v1h-1zM1641,793h1v1h-1zM1639,795h1v1h-1zM1638,796h1v1h-1zM1644,794h1v1h-1zM1645,795h1v1h-1zM1646,796h1v1h-1zM1647,797h1v1h-1zM1648,798h1v1h-1zM1648,794h1v1h-1zM1647,795h1v1h-1zM1645,797h1v1h-1zM1644,798h1v1h-1zM1650,790h1v1h-1zM1651,791h1v1h-1zM1652,792h1v1h-1zM1653,793h1v1h-1zM1654,794h1v1h-1zM1654,790h1v1h-1zM1653,791h1v1h-1zM1651,793h1v1h-1zM1650,794h1v1h-1zM1656,770h1v1h-1zM1657,771h1v1h-1zM1658,772h1v1h-1zM1659,773h1v1h-1zM1660,774h1v1h-1zM1660,770h1v1h-1zM1659,771h1v1h-1zM1657,773h1v1h-1zM1656,774h1v1h-1zM1661,762h1v1h-1zM1662,763h1v1h-1zM1663,764h1v1h-1zM1664,765h1v1h-1zM1665,766h1v1h-1zM1665,762h1v1h-1zM1664,763h1v1h-1zM1662,765h1v1h-1zM1661,766h1v1h-1zM1667,766h1v1h-1zM1668,767h1v1h-1zM1669,768h1v1h-1zM1670,769h1v1h-1zM1671,770h1v1h-1zM1671,766h1v1h-1zM1670,767h1v1h-1zM1668,769h1v1h-1zM1667,770h1v1h-1zM1673,740h1v1h-1zM1674,741h1v1h-1zM1675,742h1v1h-1zM1676,743h1v1h-1zM1677,744h1v1h-1zM1677,740h1v1h-1zM1676,741h1v1h-1zM1674,743h1v1h-1zM1673,744h1v1h-1zM1679,739h1v1h-1zM1680,740h1v1h-1zM1681,741h1v1h-1zM1682,742h1v1h-1zM1683,743h1v1h-1zM1683,739h1v1h-1zM1682,740h1v1h-1zM1680,742h1v1h-1zM1679,743h1v1h-1zM1685,742h1v1h-1zM1686,743h1v1h-1zM1687,744h1v1h-1zM1688,745h1v1h-1zM1689,746h1v1h-1zM1689,742h1v1h-1zM1688,743h1v1h-1zM1686,745h1v1h-1zM1685,746h1v1h-1zM1690,727h1v1h-1zM1691,728h1v1h-1zM1692,729h1v1h-1zM1693,730h1v1h-1zM1694,731h1v1h-1zM1694,727h1v1h-1zM1693,728h1v1h-1zM1691,730h1v1h-1zM1690,731h1v1h-1zM1696,705h1v1h-1zM1697,706h1v1h-1zM1698,707h1v1h-1zM1699,708h1v1h-1zM1700,709h1v1h-1zM1700,705h1v1h-1zM1699,706h1v1h-1zM1697,708h1v1h-1zM1696,709h1v1h-1zM1702,697h1v1h-1zM1703,698h1v1h-1zM1704,699h1v1h-1zM1705,700h1v1h-1zM1706,701h1v1h-1zM1706,697h1v1h-1zM1705,698h1v1h-1zM1703,700h1v1h-1zM1702,701h1v1h-1zM1708,697h1v1h-1zM1709,698h1v1h-1zM1710,699h1v1h-1zM1711,700h1v1h-1zM1712,701h1v1h-1zM1712,697h1v1h-1zM1711,698h1v1h-1zM1709,700h1v1h-1zM1708,701h1v1h-1zM1714,689h1v1h-1zM1715,690h1v1h-1zM1716,691h1v1h-1zM1717,692h1v1h-1zM1718,693h1v1h-1zM1718,689h1v1h-1zM1717,690h1v1h-1zM1715,692h1v1h-1zM1714,693h1v1h-1zM1719,689h1v1h-1zM1720,690h1v1h-1zM1721,691h1v1h-1zM1722,692h1v1h-1zM1723,693h1v1h-1zM1723,689h1v1h-1zM1722,690h1v1h-1zM1720,692h1v1h-1zM1719,693h1v1h-1zM1725,689h1v1h-1zM1726,690h1v1h-1zM1727,691h1v1h-1zM1728,692h1v1h-1zM1729,693h1v1h-1zM1729,689h1v1h-1zM1728,690h1v1h-1zM1726,692h1v1h-1zM1725,693h1v1h-1zM1731,682h1v1h-1zM1732,683h1v1h-1zM1733,684h1v1h-1zM1734,685h1v1h-1zM1735,686h1v1h-1zM1735,682h1v1h-1zM1734,683h1v1h-1zM1732,685h1v1h-1zM1731,686h1v1h-1zM1737,677h1v1h-1zM1738,678h1v1h-1zM1739,679h1v1h-1zM1740,680h1v1h-1zM1741,681h1v1h-1zM1741,677h1v1h-1zM1740,678h1v1h-1zM1738,680h1v1h-1zM1737,681h1v1h-1zM1742,681h1v1h-1zM1743,682h1v1h-1zM1744,683h1v1h-1zM1745,684h1v1h-1zM1746,685h1v1h-1zM1746,681h1v1h-1zM1745,682h1v1h-1zM1743,684h1v1h-1zM1742,685h1v1h-1zM1748,696h1v1h-1zM1749,697h1v1h-1zM1750,698h1v1h-1zM1751,699h1v1h-1zM1752,700h1v1h-1zM1752,696h1v1h-1zM1751,697h1v1h-1zM1749,699h1v1h-1zM1748,700h1v1h-1zM1754,717h1v1h-1zM1755,718h1v1h-1zM1756,719h1v1h-1zM1757,720h1v1h-1zM1758,721h1v1h-1zM1758,717h1v1h-1zM1757,718h1v1h-1zM1755,720h1v1h-1zM1754,721h1v1h-1zM1760,735h1v1h-1zM1761,736h1v1h-1zM1762,737h1v1h-1zM1763,738h1v1h-1zM1764,739h1v1h-1zM1764,735h1v1h-1zM1763,736h1v1h-1zM1761,738h1v1h-1zM1760,739h1v1h-1zM1766,751h1v1h-1zM1767,752h1v1h-1zM1768,753h1v1h-1zM1769,754h1v1h-1zM1770,755h1v1h-1zM1770,751h1v1h-1zM1769,752h1v1h-1zM1767,754h1v1h-1zM1766,755h1v1h-1zM1771,767h1v1h-1zM1772,768h1v1h-1zM1773,769h1v1h-1zM1774,770h1v1h-1zM1775,771h1v1h-1zM1775,767h1v1h-1zM1774,768h1v1h-1zM1772,770h1v1h-1zM1771,771h1v1h-1zM1777,780h1v1h-1zM1778,781h1v1h-1zM1779,782h1v1h-1zM1780,783h1v1h-1zM1781,784h1v1h-1zM1781,780h1v1h-1zM1780,781h1v1h-1zM1778,783h1v1h-1zM1777,784h1v1h-1zM1783,794h1v1h-1zM1784,795h1v1h-1zM1785,796h1v1h-1zM1786,797h1v1h-1zM1787,798h1v1h-1zM1787,794h1v1h-1zM1786,795h1v1h-1zM1784,797h1v1h-1zM1783,798h1v1h-1zM1789,807h1v1h-1zM1790,808h1v1h-1zM1791,809h1v1h-1zM1792,810h1v1h-1zM1793,811h1v1h-1zM1793,807h1v1h-1zM1792,808h1v1h-1zM1790,810h1v1h-1zM1789,811h1v1h-1zM1795,816h1v1h-1zM1796,817h1v1h-1zM1797,818h1v1h-1zM1798,819h1v1h-1zM1799,820h1v1h-1zM1799,816h1v1h-1zM1798,817h1v1h-1zM1796,819h1v1h-1zM1795,820h1v1h-1zM1800,821h1v1h-1zM1801,822h1v1h-1zM1802,823h1v1h-1zM1803,824h1v1h-1zM1804,825h1v1h-1zM1804,821h1v1h-1zM1803,822h1v1h-1zM1801,824h1v1h-1zM1800,825h1v1h-1zM1806,829h1v1h-1zM1807,830h1v1h-1zM1808,831h1v1h-1zM1809,832h1v1h-1zM1810,833h1v1h-1zM1810,829h1v1h-1zM1809,830h1v1h-1zM1807,832h1v1h-1zM1806,833h1v1h-1zM1812,837h1v1h-1zM1813,838h1v1h-1zM1814,839h1v1h-1zM1815,840h1v1h-1zM1816,841h1v1h-1zM1816,837h1v1h-1zM1815,838h1v1h-1zM1813,840h1v1h-1zM1812,841h1v1h-1zM1818,835h1v1h-1zM1819,836h1v1h-1zM1820,837h1v1h-1zM1821,838h1v1h-1zM1822,839h1v1h-1zM1822,835h1v1h-1zM1821,836h1v1h-1zM1819,838h1v1h-1zM1818,839h1v1h-1zM1824,833h1v1h-1zM1825,834h1v1h-1zM1826,835h1v1h-1zM1827,836h1v1h-1zM1828,837h1v1h-1zM1828,833h1v1h-1zM1827,834h1v1h-1zM1825,836h1v1h-1zM1824,837h1v1h-1zM1829,831h1v1h-1zM1830,832h1v1h-1zM1831,833h1v1h-1zM1832,834h1v1h-1zM1833,835h1v1h-1zM1833,831h1v1h-1zM1832,832h1v1h-1zM1830,834h1v1h-1zM1829,835h1v1h-1zM1835,824h1v1h-1zM1836,825h1v1h-1zM1837,826h1v1h-1zM1838,827h1v1h-1zM1839,828h1v1h-1zM1839,824h1v1h-1zM1838,825h1v1h-1zM1836,827h1v1h-1zM1835,828h1v1h-1zM1841,823h1v1h-1zM1842,824h1v1h-1zM1843,825h1v1h-1zM1844,826h1v1h-1zM1845,827h1v1h-1zM1845,823h1v1h-1zM1844,824h1v1h-1zM1842,826h1v1h-1zM1841,827h1v1h-1zM1847,813h1v1h-1zM1848,814h1v1h-1zM1849,815h1v1h-1zM1850,816h1v1h-1zM1851,817h1v1h-1zM1851,813h1v1h-1zM1850,814h1v1h-1zM1848,816h1v1h-1zM1847,817h1v1h-1z" fill="#e6e600" shape-rendering="crispEdges"/>
<polyline points="1.3,916.6 13.1,912.1 19.7,904.2 26.3,902.4 31.5,904.2 38.1,903.4 48.6,906.1 53.9,901.6 59.9,896.3 65.7,900.3 72.3,905.5 77.5,905.0 82.8,896.3 89.4,895.0 94.6,889.8 99.9,871.4 106.5,854.3 111.7,852.4 117.8,866.6 123.5,868.2 130.1,866.6 135.4,868.2 141.4,877.9 145.9,888.5 152.5,897.7 157.7,904.2 164.3,910.8 170.9,914.7 178.7,918.7 191.9,922.1 201.1,920.8 210.3,916.1 216.9,909.5 222.9,901.6 227.4,892.4 233.9,896.3 245.8,898.2 256.3,904.2 262.9,910.8 269.4,914.7 279.9,918.7 290.5,921.3 298.3,918.2 308.9,918.2 314.1,910.8 320.7,900.3 325.9,884.5 331.2,847.7 336.5,789.9 343.0,720.2 349.6,723.6 356.2,725.5 360.1,751.8 366.7,759.7 373.3,779.4 385.1,803.0 395.6,768.9 402.2,734.7 411.0,700.1 417.6,672.3 424.1,651.4 430.7,661.8 436.7,667.1 442.5,657.9 447.7,658.7 452.9,612.1 460.0,592.5 460.0,596.4 470.5,610.8 475.7,570.2 482.3,533.5 488.3,532.2 494.0,553.2 500.6,604.2 505.8,644.8 511.1,680.7 517.1,679.6 522.8,668.4 528.6,657.9 533.1,690.0 534.6,700.1 534.9,701.0 539.9,700.1 540.2,699.2 542.0,690.0 546.4,643.5 551.6,606.8 558.2,606.8 563.4,605.5 569.4,555.8 575.2,550.6 580.4,561.0 592.2,553.2 598.2,562.3 604.0,562.3 609.8,540.1 615.8,515.2 621.8,544.0 627.6,591.1 632.8,638.3 638.0,680.2 642.0,700.1 644.0,705.8 649.3,700.5 655.8,721.5 667.7,749.1 672.9,749.1 679.5,743.9 686.1,763.6 692.6,803.0 699.2,834.6 704.5,854.3 712.3,867.4 724.2,871.4 730.7,868.2 737.3,866.1 743.9,829.3 749.1,795.1 755.7,768.9 762.3,742.6 771.5,711.0 778.1,705.8 784.6,695.3 786.0,693.2 789.4,691.9 793.8,709.7 800.4,741.3 805.7,708.4 817.4,672.3 823.9,673.6 829.2,633.0 835.7,622.6 840.9,597.7 846.2,553.2 852.7,546.6 859.3,521.8 865.3,503.4 871.0,500.8 876.3,489.0 881.5,494.3 887.3,485.1 893.3,555.8 899.8,629.1 905.1,627.8 910.8,634.3 916.1,633.0 920.0,625.2 920.0,625.2 923.9,612.1 928.6,591.1 934.4,596.4 939.6,612.1 945.4,648.7 951.4,685.4 957.4,650.0 962.7,690.6 968.4,685.4 975.2,718.9 981.8,750.5 987.0,768.9 992.3,800.4 997.5,828.0 1008.1,853.0 1019.9,872.7 1031.7,875.3 1038.3,880.6 1048.8,902.9 1055.4,896.3 1061.9,868.7 1067.2,847.7 1072.5,826.7 1078.2,818.8 1084.3,822.7 1096.1,826.7 1101.4,813.5 1107.2,805.7 1113.2,788.6 1125.0,788.6 1130.3,809.6 1136.9,793.8 1142.1,761.0 1148.7,733.4 1155.3,712.3 1159.2,695.3 1165.8,705.8 1171.8,700.0 1178.9,713.7 1188.1,736.0 1194.7,736.0 1199.9,737.3 1206.5,721.5 1211.9,676.2 1217.2,664.4 1224.2,633.0 1230.2,604.2 1236.3,608.2 1241.5,623.9 1252.5,647.4 1259.0,664.4 1264.3,674.9 1269.5,676.2 1274.8,690.6 1281.3,678.8 1291.9,717.6 1298.3,674.9 1304.3,705.8 1310.6,668.4 1316.6,670.2 1327.4,755.7 1339.3,797.8 1350.7,625.2 1355.9,576.7 1362.5,572.8 1369.0,534.9 1374.2,528.3 1380.0,536.2 1380.0,536.1 1385.8,554.5 1391.8,571.5 1397.5,559.2 1403.0,580.6 1408.8,617.3 1414.5,647.4 1420.6,656.5 1425.8,609.4 1431.8,567.5 1437.1,530.9 1442.8,506.0 1449.4,513.9 1455.4,495.6 1461.1,506.0 1466.4,508.7 1472.9,545.3 1478.9,593.7 1484.7,638.2 1489.9,669.6 1500.9,713.7 1507.5,736.8 1518.7,648.7 1524.5,606.8 1530.5,640.8 1536.5,687.9 1541.7,678.8 1546.9,704.5 1553.5,712.3 1558.8,750.5 1565.3,772.8 1569.8,768.9 1575.9,733.4 1582.4,721.5 1589.0,739.9 1595.0,776.8 1600.8,805.7 1606.1,829.3 1611.3,847.7 1617.9,854.3 1628.4,873.5 1634.5,871.9 1640.3,821.4 1646.0,820.9 1652.1,800.4 1657.4,726.8 1663.4,715.8 1669.2,745.2 1675.7,667.5 1686.3,717.6 1694.1,653.9 1698.8,619.9 1704.5,622.5 1709.2,648.1 1715.5,640.8 1721.5,655.2 1728.1,669.6 1733.3,656.5 1738.6,647.4 1744.3,669.6 1755.9,763.6 1761.7,826.7 1769.1,853.0 1777.0,876.7 1790.1,904.3 1796.7,897.7 1802.7,889.8 1809.0,897.7 1815.1,899.0 1819.0,871.4 1826.9,853.0 1837.4,813.6 1842.7,818.8 1849.0,787.3" fill="none" stroke="#00e600" stroke-width="1.2"/>
<polyline points="1.3,904.2 13.1,868.7 19.7,824.1 25.5,815.6 31.0,830.6 36.8,834.6 43.4,845.1 48.6,849.0 55.2,833.3 59.9,809.6 65.7,829.3 71.5,847.2 77.5,842.5 82.8,813.0 88.1,815.6 94.1,804.3 101.2,737.3 107.2,721.5 111.7,722.9 117.5,768.1 123.0,768.9 130.1,746.5 135.4,738.6 141.4,751.8 145.9,780.7 152.5,795.1 157.7,839.8 164.3,854.3 170.9,876.6 176.1,895.0 182.7,902.9 193.2,916.1 201.1,879.3 210.3,837.2 216.9,813.5 222.1,778.1 227.4,746.5 233.9,774.1 239.2,780.7 245.8,792.5 251.0,804.3 256.3,847.7 261.5,877.9 268.1,888.5 274.7,891.1 279.9,902.9 285.2,912.9 291.8,902.9 297.0,891.1 302.3,892.4 308.9,891.1 315.4,847.7 322.0,814.9 327.3,774.1 332.0,700.1 333.8,661.8 336.4,597.7 343.5,545.3 349.5,592.5 355.5,618.6 360.8,659.2 366.5,671.0 371.8,685.4 375.7,700.1 384.3,709.7 390.3,690.0 395.3,680.2 401.9,657.9 413.1,639.6 424.1,616.0 430.7,623.9 435.9,627.8 442.5,625.2 447.7,625.2 452.9,546.6 460.0,530.9 460.0,533.5 470.5,551.9 476.2,521.8 482.3,493.0 488.8,498.2 495.3,517.8 500.6,533.5 505.8,551.9 511.1,588.5 517.6,576.7 522.8,574.1 528.6,576.7 534.6,626.5 539.9,617.3 546.4,575.4 551.6,561.0 558.2,563.7 563.4,562.3 569.4,510.0 575.2,523.1 580.4,553.2 585.7,545.3 592.2,541.4 598.2,546.6 604.0,540.1 609.8,520.5 615.8,503.4 621.8,528.3 627.6,559.7 632.8,604.2 638.6,623.9 644.6,633.0 650.6,626.5 656.4,678.8 661.6,690.6 662.4,690.0 665.5,700.1 667.7,715.0 674.2,709.7 679.5,700.5 684.7,729.4 690.0,768.9 695.3,816.2 701.8,870.1 708.4,870.1 713.7,862.2 720.2,855.6 725.5,853.0 732.1,843.0 737.3,843.0 742.6,803.0 747.8,753.1 754.4,742.6 759.7,715.0 764.9,703.1 770.2,690.0 771.6,686.7 778.1,684.1 784.1,676.2 789.4,676.2 794.6,700.1 800.4,712.3 805.7,700.5 806.9,681.5 813.4,668.4 818.7,640.9 823.9,622.6 826.5,597.7 829.2,553.2 835.7,562.3 840.9,542.7 846.2,502.1 852.7,523.1 859.3,504.7 865.3,493.0 871.0,494.3 876.3,477.3 881.5,481.2 887.3,481.2 893.3,553.2 899.8,596.4 905.1,583.3 910.3,578.1 916.1,576.7 920.0,570.2 920.0,570.2 923.9,559.7 929.2,545.3 934.4,546.6 939.6,558.4 946.2,572.8 951.4,593.8 958.0,576.7 962.4,594.5 968.4,590.6 975.0,604.2 980.7,613.4 986.8,626.5 992.0,661.8 997.2,684.1 1004.1,705.8 1010.7,718.9 1015.9,730.7 1021.2,758.3 1026.5,776.7 1032.5,791.2 1038.3,824.1 1043.5,858.2 1048.8,897.7 1054.1,871.4 1059.3,837.2 1065.9,800.4 1072.5,779.4 1078.2,773.6 1084.3,782.0 1096.1,788.6 1101.4,777.5 1107.9,775.4 1114.0,767.5 1119.8,768.9 1125.0,766.2 1130.3,772.8 1136.9,759.7 1142.1,739.9 1148.7,716.3 1155.3,700.5 1159.6,680.2 1165.6,688.0 1170.8,677.5 1176.6,671.0 1182.3,663.7 1188.4,668.4 1193.6,651.4 1201.4,642.2 1205.9,623.9 1209.3,580.7 1211.9,550.6 1217.2,533.5 1222.4,513.9 1228.9,503.4 1235.5,513.9 1239.9,530.9 1246.7,538.8 1251.2,567.6 1257.7,602.9 1264.3,623.9 1269.5,627.8 1275.5,640.9 1281.3,629.1 1287.8,643.5 1292.3,660.5 1298.3,621.2 1304.3,642.2 1310.6,613.4 1316.6,616.0 1321.9,651.4 1332.7,720.2 1339.3,754.4 1343.2,705.8 1349.4,612.1 1355.9,529.6 1362.5,533.0 1367.7,501.6 1372.9,502.6 1380.0,517.8 1380.0,517.8 1385.8,537.4 1391.3,544.5 1397.5,530.9 1403.0,545.3 1408.8,580.6 1414.5,612.0 1420.6,617.3 1425.8,567.5 1431.8,533.5 1437.1,502.1 1442.8,489.0 1449.4,506.0 1455.4,482.5 1461.1,498.2 1466.4,499.5 1472.9,536.1 1478.9,557.1 1484.7,570.2 1489.9,585.9 1495.7,601.6 1501.7,609.4 1507.5,616.0 1513.5,591.1 1518.7,567.5 1524.5,541.4 1530.5,558.4 1536.5,587.2 1541.7,587.2 1547.5,613.3 1553.3,627.7 1559.3,657.8 1565.8,664.4 1571.1,661.8 1576.8,651.3 1582.8,650.0 1588.9,656.5 1594.6,668.3 1600.6,681.4 1607.4,711.0 1612.7,733.4 1617.9,768.9 1621.9,805.7 1627.6,864.8 1633.7,868.2 1639.7,796.5 1646.0,805.7 1650.8,801.7 1657.4,745.2 1663.4,726.8 1669.2,743.9 1675.7,684.0 1686.3,708.4 1694.1,672.2 1698.8,616.0 1704.5,614.6 1709.2,639.5 1715.5,623.8 1721.5,630.4 1728.1,635.6 1733.3,623.8 1738.6,617.8 1744.3,626.4 1749.0,661.8 1754.6,697.9 1761.2,737.3 1766.5,768.9 1771.7,826.7 1777.0,858.3 1783.5,892.4 1790.1,906.1 1796.7,897.7 1802.7,889.8 1809.0,895.1 1815.1,897.7 1819.0,871.4 1825.6,860.9 1831.6,850.4 1837.4,839.8 1842.7,846.4 1849.0,830.6" fill="none" stroke="#fff" stroke-width="1.2"/>
<line x1="0" y1="931.5" x2="1849" y2="931.5" stroke="#c00000" stroke-width="1.5"/>
<text x="2.5" y="13" font-size="12" fill="#c0c0c0" textLength="163.5" lengthAdjust="spacingAndGlyphs">603275 众辰科技(日线,前复权)</text>
<circle cx="178" cy="8.3" r="6" fill="#808080"/><path d="M175,7l3,3l3,-3" stroke="#1a1a1a" stroke-width="1.3" fill="none"/>
<text x="188" y="13" font-size="12" fill="#c0c0c0" textLength="71" lengthAdjust="spacingAndGlyphs">主升顶底轨道</text>
<text x="265" y="13" font-size="12" fill="#ffff00" textLength="59.5" lengthAdjust="spacingAndGlyphs">MA5: 47.80</text>
<text x="330" y="13" font-size="12" fill="#ff00ff" textLength="66" lengthAdjust="spacingAndGlyphs">MA10: 46.97</text>
<text x="402.4" y="13" font-size="12" fill="#ff8080" textLength="65.80000000000001" lengthAdjust="spacingAndGlyphs">MA20: 48.94</text>
<text x="473.8" y="13" font-size="12" fill="#6464ff" textLength="48.900000000000034" lengthAdjust="spacingAndGlyphs">马: 58.76</text>
<text x="528" y="13" font-size="12" fill="#ff80ff" textLength="48.799999999999955" lengthAdjust="spacingAndGlyphs">界: 54.32</text>
<text x="582" y="13" font-size="12" fill="#00c000" textLength="36.799999999999955" lengthAdjust="spacingAndGlyphs">: 54.32</text>
<text x="624.4" y="13" font-size="12" fill="#ff0000" textLength="37.60000000000002" lengthAdjust="spacingAndGlyphs">: 58.76</text>
<text x="666.4" y="13" font-size="12" fill="#ff00ff" textLength="36.60000000000002" lengthAdjust="spacingAndGlyphs">: 58.76</text>
<text x="707.5" y="13" font-size="12" fill="#00ff00" textLength="65.79999999999995" lengthAdjust="spacingAndGlyphs">偏离度: 0.93</text>
<path d="M1841.5,3l5.5,5.5l-5.5,5.5l-5.5,-5.5z" stroke="#a0a0a0" stroke-width="1" fill="none"/>
<circle cx="7" cy="465" r="6" fill="#808080"/><path d="M4,463.5l3,3l3,-3" stroke="#1a1a1a" stroke-width="1.3" fill="none"/>
<text x="17" y="470" font-size="12" fill="#c0c0c0" textLength="70.7" lengthAdjust="spacingAndGlyphs">顶底波段之王</text>
<text x="93.7" y="470" font-size="12" fill="#c0c0c0" textLength="72.3" lengthAdjust="spacingAndGlyphs">风险值: 20.42</text>
<text x="171.5" y="470" font-size="12" fill="#c0c0c0" textLength="73.30000000000001" lengthAdjust="spacingAndGlyphs">警示线: 10.00</text>
<text x="250" y="470" font-size="12" fill="#00ff00" textLength="47" lengthAdjust="spacingAndGlyphs">W: 29.52</text>
<text x="302.4" y="470" font-size="12" fill="#ffff00" textLength="44.5" lengthAdjust="spacingAndGlyphs">Z: 23.33</text>
<text x="352" y="470" font-size="12" fill="#ff0000" textLength="36.80000000000001" lengthAdjust="spacingAndGlyphs">: 15.00</text>
<text x="394" y="470" font-size="12" fill="#ffffff" textLength="36.60000000000002" lengthAdjust="spacingAndGlyphs">: 50.00</text>
<text x="436" y="470" font-size="12" fill="#ffffff" textLength="37" lengthAdjust="spacingAndGlyphs">: 90.00</text>
<path d="M137.5,932v3M169.5,932v3M201.5,932v3M260.5,932v3M288.5,932v3M316.5,932v3M369.5,932v3M394.5,932v3M420.5,932v3M477.5,932v3M507.5,932v3M538.5,932v3M600.5,932v3M632.5,932v3M663.5,932v3M721.5,932v3M747.5,932v3M772.5,932v3M825.5,932v3M852.5,932v3M878.5,932v3M934.5,932v3M965.5,932v3M996.5,932v3M1056.5,932v3M1086.5,932v3M1117.5,932v3M1175.5,932v3M1202.5,932v3M1230.5,932v3M1286.5,932v3M1315.5,932v3M1343.5,932v3M1406.5,932v3M1440.5,932v3M1473.5,932v3M1536.5,932v3M1567.5,932v3M1597.5,932v3M1659.5,932v3M1691.5,932v3M1723.5,932v3M1784.5,932v3M1816.5,932v3M105.5,932v5M233.5,932v5M343.5,932v5M446.5,932v5M568.5,932v5M695.5,932v5M800.5,932v5M904.5,932v5M1026.5,932v5M1147.5,932v5M1258.5,932v5M1372.5,932v5M1506.5,932v5M1627.5,932v5M1755.5,932v5M1847.5,932v5" stroke="#c00000" stroke-width="1" fill="none"/>
<path d="M3,935h2v1h-2zM10,935h2v1h-2zM17,935h2v1h-2zM26,935h1v1h-1zM31,934h1v2h-1zM108,935h3v1h-3zM236,935h3v1h-3zM346,935h3v1h-3zM449,935h3v1h-3zM571,935h3v1h-3zM698,935h3v1h-3zM803,935h3v1h-3zM907,935h3v1h-3zM1029,935h3v1h-3zM1150,935h3v1h-3zM1261,935h3v1h-3zM1375,935h3v1h-3zM1509,935h3v1h-3zM1630,935h3v1h-3zM1758,935h3v1h-3zM1850,935h3v1h-3z" fill="#ff2020"/>
</svg>
</body></html>
